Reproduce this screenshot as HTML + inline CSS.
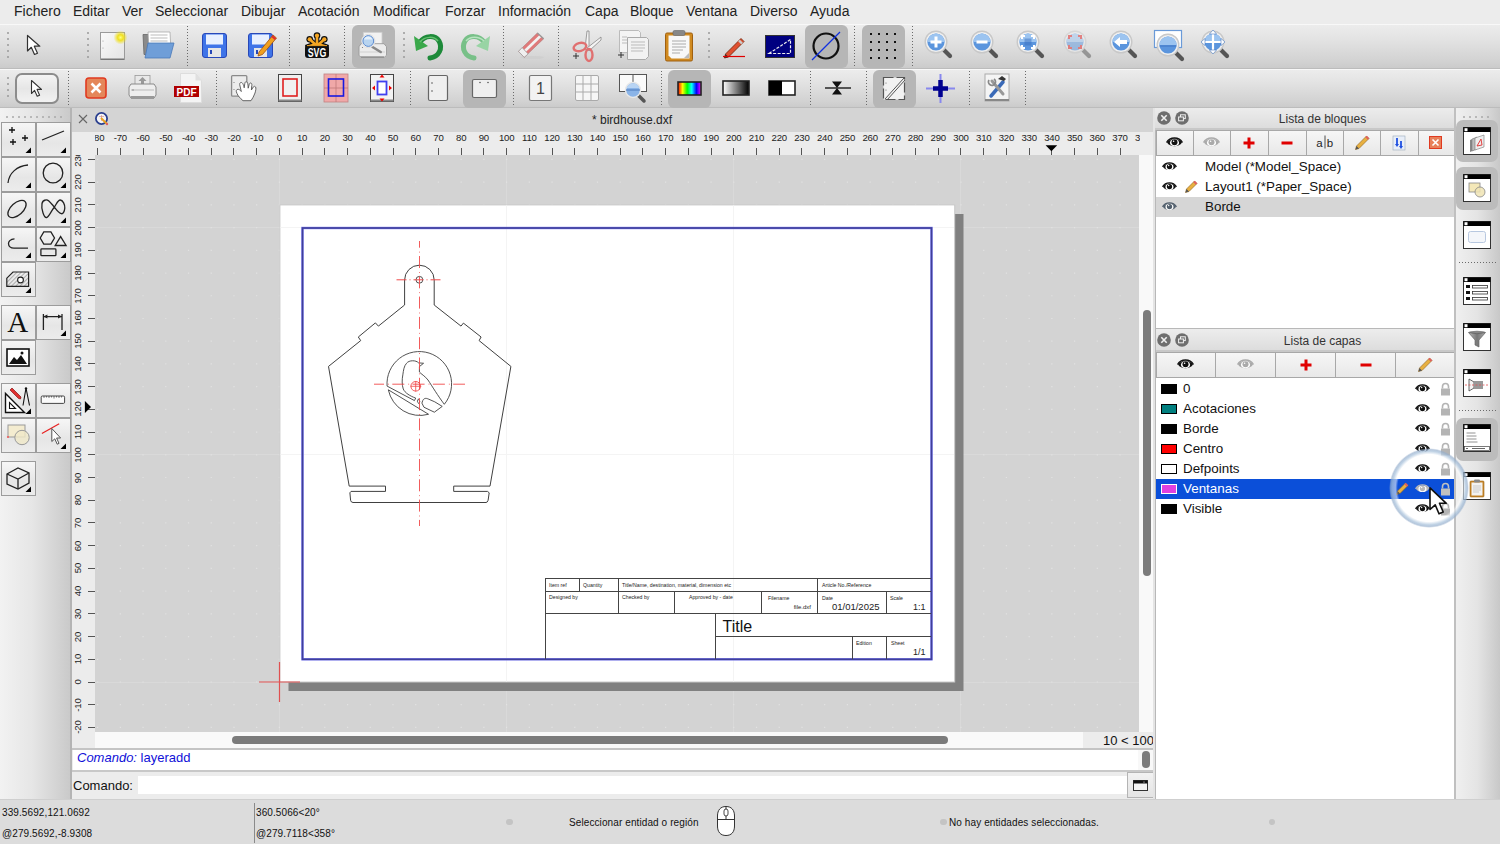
<!DOCTYPE html>
<html><head><meta charset="utf-8">
<style>
*{margin:0;padding:0;box-sizing:border-box}
html,body{width:1500px;height:844px;overflow:hidden;background:#ececec;font-family:"Liberation Sans",sans-serif;color:#1a1a1a}
.a{position:absolute}
svg.a{overflow:visible}
#menu{left:0;top:0;width:1500px;height:24px;background:#ececec}
#menu span{position:absolute;top:3px;font-size:14px;color:#222}
.tb{background:linear-gradient(#ececec 0%,#e4e4e4 30%,#d2d2d2 85%,#cbcbcb 100%)}
#tb1{left:0;top:24px;width:1500px;height:45px;border-top:1px solid #f8f8f8;border-bottom:1px solid #bcbcbc}
#tb2{left:0;top:69px;width:1500px;height:39px;border-top:1px solid #f8f8f8;border-bottom:1px solid #bcbcbc}
.sep{position:absolute;width:2px;background-image:radial-gradient(circle,#777 0.7px,transparent 1px);background-size:2px 4px}
.hl{position:absolute;background:#c6c6c6;border-radius:5px}
#left{left:0;top:108px;width:71px;height:691px;background:linear-gradient(90deg,#f2f2f2,#e6e6e6 45%,#c9c9c9)}
#tabbar{left:72px;top:108px;width:1082px;height:24px;background:#d4d4d4}
#rulerT{left:72px;top:132px;width:1082px;height:23px;background:#ececec}
#rulerL{left:72px;top:155px;width:23px;height:593px;background:#ececec}
#canvas{left:95px;top:155px;width:1044px;height:577px;background:#d3d3d3;overflow:hidden}
#hscroll{left:95px;top:732px;width:988px;height:16px;background:#f9f9f9}
#vscroll{left:1139px;top:155px;width:14px;height:577px;background:#f9f9f9}
.rl{position:absolute;top:1px;width:40px;text-align:center;font-size:9.6px;letter-spacing:-0.2px;line-height:12px;color:#222}
.rv{position:absolute;left:-14px;width:40px;height:12px;text-align:center;font-size:9.6px;letter-spacing:-0.2px;line-height:12px;color:#222;transform:rotate(-90deg)}
#cmdout{left:72px;top:749px;width:1082px;height:22px;background:#fff;border-top:1px solid #c8c8c8;border-bottom:1px solid #c8c8c8}
#cmdin{left:72px;top:771px;width:1082px;height:28px;background:#ececec}
#status{left:0;top:799px;width:1500px;height:45px;background:#dcdcdc;border-top:1px solid #cfcfcf}
#dock{left:1155px;top:108px;width:300px;height:691px;background:#ececec}
#rtb{left:1455px;top:108px;width:45px;height:691px;background:linear-gradient(90deg,#f0f0f0,#e4e4e4 50%,#c8c8c8)}
</style></head>
<body>
<div id="menu" class="a">
<span style="left:14px">Fichero</span>
<span style="left:73px">Editar</span>
<span style="left:122px">Ver</span>
<span style="left:155px">Seleccionar</span>
<span style="left:241px">Dibujar</span>
<span style="left:298px">Acotación</span>
<span style="left:373px">Modificar</span>
<span style="left:445px">Forzar</span>
<span style="left:498px">Información</span>
<span style="left:585px">Capa</span>
<span style="left:630px">Bloque</span>
<span style="left:686px">Ventana</span>
<span style="left:750px">Diverso</span>
<span style="left:810px">Ayuda</span>
</div>
<div id="tb1" class="a tb"></div>
<svg class="a" style="left:7px;top:32px" width="2" height="30" viewBox="0 0 2 30"><rect x="0" y="0" width="2" height="2" rx="1" fill="#9a9a9a"/><rect x="0" y="6" width="2" height="2" rx="1" fill="#9a9a9a"/><rect x="0" y="12" width="2" height="2" rx="1" fill="#9a9a9a"/><rect x="0" y="18" width="2" height="2" rx="1" fill="#9a9a9a"/><rect x="0" y="24" width="2" height="2" rx="1" fill="#9a9a9a"/></svg>
<svg class="a" style="left:26px;top:34px" width="16" height="22" viewBox="0 0 16 22"><path d="M1.5 1.5L1.5 17L5.3 13.3L8.5 20.5L11.5 19.2L8.3 12.2L13.8 12.2Z" fill="#fff" stroke="#333" stroke-width="1.2" stroke-linejoin="round"/></svg>
<svg class="a" style="left:87px;top:32px" width="2" height="30" viewBox="0 0 2 30"><rect x="0" y="0" width="2" height="2" rx="1" fill="#9a9a9a"/><rect x="0" y="6" width="2" height="2" rx="1" fill="#9a9a9a"/><rect x="0" y="12" width="2" height="2" rx="1" fill="#9a9a9a"/><rect x="0" y="18" width="2" height="2" rx="1" fill="#9a9a9a"/><rect x="0" y="24" width="2" height="2" rx="1" fill="#9a9a9a"/></svg>
<svg class="a" style="left:99px;top:30px" width="30" height="32" viewBox="0 0 30 32"><defs><linearGradient id="pg" x1="0" y1="0" x2="1" y2="1"><stop offset="0" stop-color="#fafafa"/><stop offset="1" stop-color="#e4e4e4"/></linearGradient><radialGradient id="glow"><stop offset="0" stop-color="#ffff80"/><stop offset="0.4" stop-color="#f0e020"/><stop offset="1" stop-color="#f0e020" stop-opacity="0"/></radialGradient></defs><rect x="1.5" y="2.5" width="24" height="27" fill="url(#pg)" stroke="#9a9a9a" stroke-width="1"/><rect x="2" y="28.5" width="23" height="1.5" fill="#777"/><circle cx="4" cy="11" r="0.6" fill="#999"/><circle cx="4" cy="18" r="0.6" fill="#999"/><circle cx="21.5" cy="7.5" r="7" fill="url(#glow)"/></svg>
<svg class="a" style="left:142px;top:31px" width="35" height="29" viewBox="0 0 35 29"><path d="M1 3.5h8l2 2h15v18H2z" fill="#8a8a8a" stroke="#666" stroke-width="0.8"/><path d="M6 1h22l1 19H7z" fill="#fff" stroke="#aaa" stroke-width="0.8"/><path d="M8.5 4h17M8.5 7h17M8.5 10h17" stroke="#bbb" stroke-width="1.2"/><path d="M6 12h26l-4 15H3z" fill="#6f9ed8" stroke="#4a78b8" stroke-width="0.8"/></svg>
<div class="a" style="left:186.5px;top:26px;width:1px;height:41px;background:repeating-linear-gradient(#6a6a6a 0 1px,transparent 1px 3px)"></div>
<svg class="a" style="left:201px;top:32px" width="27" height="27" viewBox="0 0 27 27"><rect x="1.5" y="1.5" width="24" height="24" rx="2.5" fill="#3f74e8" stroke="#2848b8" stroke-width="1"/><rect x="5" y="2.5" width="17" height="10" fill="#e8f0ff"/><rect x="7" y="16" width="13" height="9" fill="#e6e6e6"/><rect x="9" y="18" width="2" height="4" fill="#2848b8"/></svg>
<svg class="a" style="left:247px;top:30px" width="31" height="30" viewBox="0 0 31 30"><rect x="1.5" y="3.5" width="24" height="24" rx="2.5" fill="#3f74e8" stroke="#2848b8" stroke-width="1"/><rect x="5" y="4.5" width="17" height="10" fill="#e8f0ff"/><rect x="7" y="18" width="13" height="9" fill="#e6e6e6"/><rect x="9" y="20" width="2" height="4" fill="#2848b8"/><path d="M12 22L26 5L29.5 8L15.5 24.5L11 26Z" fill="#f0a020" stroke="#a05010" stroke-width="0.8"/><path d="M25 6.2L28.5 9.2" stroke="#e03030" stroke-width="2.2"/></svg>
<div class="a" style="left:288.5px;top:26px;width:1px;height:41px;background:repeating-linear-gradient(#6a6a6a 0 1px,transparent 1px 3px)"></div>
<svg class="a" style="left:303px;top:32px" width="28" height="27" viewBox="0 0 28 27"><g fill="#111"><circle cx="6.7" cy="7.3" r="3.3"/><circle cx="14" cy="3.6" r="3.3"/><circle cx="21.3" cy="7.3" r="3.3"/></g><g stroke="#111" stroke-width="4.6" stroke-linecap="round"><path d="M14 14L6.7 7.3M14 14L14 3.6M14 14L21.3 7.3"/></g><path d="M2.5 14Q14 8 25.5 14Z" fill="#111" stroke="#111" stroke-width="2"/><g stroke="#f5a623" stroke-width="2.6" stroke-linecap="round"><path d="M14 14L6.7 7.3M14 14L14 3.6M14 14L21.3 7.3"/></g><circle cx="6.7" cy="7.3" r="2.1" fill="#f5a623"/><circle cx="14" cy="3.6" r="2.1" fill="#f5a623"/><circle cx="21.3" cy="7.3" r="2.1" fill="#f5a623"/><path d="M4 13.6Q14 9.5 24 13.6Z" fill="#f5a623"/><rect x="2" y="13" width="24" height="13" rx="3" fill="#111"/><path d="M4 13.6H24" stroke="#f5a623" stroke-width="1"/><text x="14" y="24.6" font-size="12.5" font-weight="bold" fill="#fff" text-anchor="middle" font-family="Liberation Sans" textLength="18.6" lengthAdjust="spacingAndGlyphs">SVG</text></svg>
<div class="a" style="left:344px;top:26px;width:1px;height:41px;background:repeating-linear-gradient(#6a6a6a 0 1px,transparent 1px 3px)"></div>
<div class="a" style="left:352px;top:25px;width:43px;height:43px;background:#b6b6b6;border-radius:6px"></div>
<svg class="a" style="left:358px;top:30px" width="32" height="30" viewBox="0 0 32 30"><rect x="5.3" y="2.3" width="18.7" height="14" fill="#f2f2f2" stroke="#ccc" stroke-width="0.8"/><path d="M3 13.7h23l2.5 3v8.5l-2 2H3l-2-2v-8.5z" fill="#ececec" stroke="#9a9a9a" stroke-width="0.9"/><path d="M2 22h25" stroke="#d0d0d0" stroke-width="1"/><rect x="3" y="26.2" width="23" height="1.8" fill="#8a8a8a" opacity="0.7"/><circle cx="4.5" cy="17.5" r="0.6" fill="#777"/><path d="M14.5 17L22.7 22" stroke="#888" stroke-width="2.6" stroke-linecap="round"/><circle cx="10.3" cy="11" r="6.6" fill="#fff" stroke="#ddd" stroke-width="1"/><circle cx="10.3" cy="11" r="5.4" fill="#b8d4f0" stroke="#5a8ad0" stroke-width="1"/><path d="M6 9.5A4.5 4.5 0 0 1 14.5 9.5" fill="#e4f0fc"/></svg>
<svg class="a" style="left:403px;top:32px" width="2" height="30" viewBox="0 0 2 30"><rect x="0" y="0" width="2" height="2" rx="1" fill="#9a9a9a"/><rect x="0" y="6" width="2" height="2" rx="1" fill="#9a9a9a"/><rect x="0" y="12" width="2" height="2" rx="1" fill="#9a9a9a"/><rect x="0" y="18" width="2" height="2" rx="1" fill="#9a9a9a"/><rect x="0" y="24" width="2" height="2" rx="1" fill="#9a9a9a"/></svg>
<svg class="a" style="left:413px;top:32px" width="32" height="28" viewBox="0 0 32 28"><path d="M7 10C12 3 22 3 26 9C30 16 26 25 17 26" fill="none" stroke="#1e8a3a" stroke-width="5" stroke-linecap="round"/><path d="M1 4L3 19L15 14Z" fill="#3aa84a"/><path d="M7 10C12 4 21 4 25 9" fill="none" stroke="#66c070" stroke-width="1.5"/></svg>
<svg class="a" style="left:459px;top:32px" width="32" height="28" viewBox="0 0 32 28"><path d="M25 10C20 3 10 3 6 9C2 16 6 25 15 26" fill="none" stroke="#78c088" stroke-width="5" stroke-linecap="round"/><path d="M31 4L29 19L17 14Z" fill="#98d4a4"/><path d="M25 9C20 4 11 4 7 9" fill="none" stroke="#b8e4c0" stroke-width="1.3"/></svg>
<div class="a" style="left:502.5px;top:26px;width:1px;height:41px;background:repeating-linear-gradient(#6a6a6a 0 1px,transparent 1px 3px)"></div>
<svg class="a" style="left:510px;top:26px" width="40" height="40" viewBox="0 0 40 40"><ellipse cx="22" cy="31.5" rx="12" ry="1.6" fill="#cfcfcf"/><path d="M8.5 25.4L27.3 7.1L33.6 12.8L14.2 31.3Z" fill="#e07a7a" stroke="#b07070" stroke-width="0.6"/><path d="M15.15 24.8L30.45 9.95" stroke="#f2f2f2" stroke-width="2.6"/><path d="M27.3 7.1L33.6 12.8" stroke="#999" stroke-width="1.4"/><path d="M8.5 25.4L12.1 21.6L18.2 28L14.2 31.3Z" fill="#f0f0f0" stroke="#999" stroke-width="0.7"/></svg>
<div class="a" style="left:558px;top:26px;width:1px;height:41px;background:repeating-linear-gradient(#6a6a6a 0 1px,transparent 1px 3px)"></div>
<svg class="a" style="left:572px;top:30px" width="30" height="32" viewBox="0 0 30 32"><path d="M15 1L13 19L17 20L17 1Z" fill="#f4f4f4" stroke="#888" stroke-width="0.8"/><path d="M29 7L15 18L17 21L29 10Z" fill="#f4f4f4" stroke="#888" stroke-width="0.8"/><ellipse cx="8" cy="17" rx="6.5" ry="4" fill="none" stroke="#e07070" stroke-width="2.4" transform="rotate(-15 8 17)"/><ellipse cx="17" cy="25" rx="3.5" ry="6" fill="none" stroke="#e07070" stroke-width="2.4"/><path d="M1 26h6M4 23v6" stroke="#333" stroke-width="1"/></svg>
<svg class="a" style="left:617px;top:29px" width="33" height="33" viewBox="0 0 33 33"><path d="M2.5 1.5h19l2 2v20h-21z" fill="#f4f4f4" stroke="#bbb" stroke-width="1"/><path d="M10.5 8.5h19l2 2v17l-3 3h-18z" fill="#f2f2f2" stroke="#aaa" stroke-width="1"/><path d="M14 13h14M14 16h14M14 19h14M14 22h12M5 8h5M5 11h5M5 14h5" stroke="#bbb" stroke-width="1"/><path d="M1 26h6M4 23v6" stroke="#333" stroke-width="1"/></svg>
<svg class="a" style="left:664px;top:29px" width="30" height="33" viewBox="0 0 30 33"><rect x="1.5" y="4" width="27" height="28" rx="1.5" fill="#d08a20" stroke="#a06010" stroke-width="1"/><path d="M4.5 6.5h21v23h-18l-3-3z" fill="#f8f8f8"/><rect x="9" y="1.5" width="12" height="5" rx="1.5" fill="#888" stroke="#666" stroke-width="0.6"/><path d="M8 12h14M8 15h14M8 18h14M8 21h11M8 24h8" stroke="#aaa" stroke-width="1"/><path d="M20 29l5-5v5z" fill="#bbb"/></svg>
<svg class="a" style="left:708px;top:32px" width="2" height="30" viewBox="0 0 2 30"><rect x="0" y="0" width="2" height="2" rx="1" fill="#9a9a9a"/><rect x="0" y="6" width="2" height="2" rx="1" fill="#9a9a9a"/><rect x="0" y="12" width="2" height="2" rx="1" fill="#9a9a9a"/><rect x="0" y="18" width="2" height="2" rx="1" fill="#9a9a9a"/><rect x="0" y="24" width="2" height="2" rx="1" fill="#9a9a9a"/></svg>
<svg class="a" style="left:722px;top:34px" width="24" height="24" viewBox="0 0 24 24"><path d="M3.5 20L19 4.5L22 7.5L6.5 23L2.5 24Z" fill="#e05030" stroke="#7a2a10" stroke-width="0.9"/><path d="M17 6.5L20 9.5" stroke="#ccc" stroke-width="2.4"/><path d="M2.5 24L3.5 20L6.5 23Z" fill="#333"/><path d="M1 22.5h22" stroke="#e00000" stroke-width="1.2"/></svg>
<svg class="a" style="left:765px;top:35px" width="30" height="23" viewBox="0 0 30 23"><rect x="0.5" y="0.5" width="29" height="22" fill="#000080" stroke="#333" stroke-width="1"/><path d="M4 18.5L25.5 4.5V18.5Z" fill="none" stroke="#eee" stroke-width="1.2" stroke-dasharray="3 1.5"/></svg>
<div class="a" style="left:805px;top:25px;width:42.5px;height:43px;background:#b6b6b6;border-radius:6px"></div>
<svg class="a" style="left:810px;top:30px" width="32" height="32" viewBox="0 0 32 32"><circle cx="16" cy="16" r="12.5" fill="none" stroke="#111" stroke-width="2.2"/><path d="M2 30L30 2" stroke="#1030e0" stroke-width="1.3"/></svg>
<div class="a" style="left:854px;top:26px;width:1px;height:41px;background:repeating-linear-gradient(#6a6a6a 0 1px,transparent 1px 3px)"></div>
<div class="a" style="left:862px;top:25px;width:43px;height:43px;background:#b6b6b6;border-radius:6px"></div>
<svg class="a" style="left:870px;top:33px" width="26" height="26" viewBox="0 0 26 26"><rect x="0" y="0" width="2" height="2" fill="#111"/><rect x="0" y="8" width="2" height="2" fill="#111"/><rect x="0" y="16" width="2" height="2" fill="#111"/><rect x="0" y="24" width="2" height="2" fill="#111"/><rect x="8" y="0" width="2" height="2" fill="#111"/><rect x="8" y="8" width="2" height="2" fill="#111"/><rect x="8" y="16" width="2" height="2" fill="#111"/><rect x="8" y="24" width="2" height="2" fill="#111"/><rect x="16" y="0" width="2" height="2" fill="#111"/><rect x="16" y="8" width="2" height="2" fill="#111"/><rect x="16" y="16" width="2" height="2" fill="#111"/><rect x="16" y="24" width="2" height="2" fill="#111"/><rect x="24" y="0" width="2" height="2" fill="#111"/><rect x="24" y="8" width="2" height="2" fill="#111"/><rect x="24" y="16" width="2" height="2" fill="#111"/><rect x="24" y="24" width="2" height="2" fill="#111"/></svg>
<div class="a" style="left:911.5px;top:26px;width:1px;height:41px;background:repeating-linear-gradient(#6a6a6a 0 1px,transparent 1px 3px)"></div>
<svg class="a" style="left:921.3px;top:27px" width="34" height="34" viewBox="0 0 34 34"><path d="M22 22L29 29" stroke="#555" stroke-width="4.2" stroke-linecap="round"/><circle cx="15" cy="15" r="10.8" fill="#f0f0f0" stroke="#c8c8c8" stroke-width="1.4"/><circle cx="15" cy="15" r="8.6" fill="#5b95dd"/><path d="M6.4 15A8.6 8.6 0 0 1 23.6 15" fill="#9cc4f0" /><path d="M15 9.5v11M9.5 15h11" stroke="#fff" stroke-width="3"/></svg>
<svg class="a" style="left:967.1px;top:27px" width="34" height="34" viewBox="0 0 34 34"><path d="M22 22L29 29" stroke="#555" stroke-width="4.2" stroke-linecap="round"/><circle cx="15" cy="15" r="10.8" fill="#f0f0f0" stroke="#c8c8c8" stroke-width="1.4"/><circle cx="15" cy="15" r="8.6" fill="#5b95dd"/><path d="M6.4 15A8.6 8.6 0 0 1 23.6 15" fill="#9cc4f0" /><path d="M9.5 15h11" stroke="#fff" stroke-width="3"/></svg>
<svg class="a" style="left:1013.3px;top:27px" width="34" height="34" viewBox="0 0 34 34"><path d="M22 22L29 29" stroke="#555" stroke-width="4.2" stroke-linecap="round"/><circle cx="15" cy="15" r="10.8" fill="#f0f0f0" stroke="#c8c8c8" stroke-width="1.4"/><circle cx="15" cy="15" r="8.6" fill="#5b95dd"/><path d="M6.4 15A8.6 8.6 0 0 1 23.6 15" fill="#9cc4f0" /><path d="M9 12V9h3M18 9h3v3M21 18v3h-3M12 21H9v-3" fill="none" stroke="#fff" stroke-width="2"/><rect x="11.5" y="11.5" width="7" height="7" fill="#3a6fc0" opacity="0.5"/></svg>
<svg class="a" style="left:1059.5px;top:27px" width="34" height="34" viewBox="0 0 34 34"><g opacity="0.5"><path d="M22 22L29 29" stroke="#555" stroke-width="4.2" stroke-linecap="round"/><circle cx="15" cy="15" r="10.8" fill="#f0f0f0" stroke="#c8c8c8" stroke-width="1.4"/><circle cx="15" cy="15" r="8.6" fill="#5b95dd"/><path d="M6.4 15A8.6 8.6 0 0 1 23.6 15" fill="#9cc4f0" /><path d="M9 12V9h3M18 9h3v3M21 18v3h-3M12 21H9v-3" fill="none" stroke="#e02020" stroke-width="2"/></g></svg>
<svg class="a" style="left:1105.7px;top:27px" width="34" height="34" viewBox="0 0 34 34"><path d="M22 22L29 29" stroke="#555" stroke-width="4.2" stroke-linecap="round"/><circle cx="15" cy="15" r="10.8" fill="#f0f0f0" stroke="#c8c8c8" stroke-width="1.4"/><circle cx="15" cy="15" r="8.6" fill="#5b95dd"/><path d="M6.4 15A8.6 8.6 0 0 1 23.6 15" fill="#9cc4f0" /><path d="M8 15l6-5v3h7v4h-7v3z" fill="#fff"/></svg>
<svg class="a" style="left:1153px;top:29px" width="34" height="34" viewBox="0 0 34 34"><rect x="1.5" y="1.5" width="27" height="17" fill="#fff" stroke="#6a9ad8" stroke-width="1.2"/><path d="M22 23L29 30" stroke="#555" stroke-width="4.2" stroke-linecap="round"/><circle cx="15" cy="16" r="10.8" fill="#f0f0f0" stroke="#c8c8c8" stroke-width="1.4"/><circle cx="15" cy="16" r="8.6" fill="#5b95dd"/><path d="M6.4 16A8.6 8.6 0 0 1 23.6 16" fill="#9cc4f0" /><path d="M6.5 17h17" stroke="#3a70c0" stroke-width="0.8"/></svg>
<svg class="a" style="left:1198.1px;top:27px" width="34" height="34" viewBox="0 0 34 34"><path d="M22 22L29 29" stroke="#555" stroke-width="4.2" stroke-linecap="round"/><circle cx="15" cy="15" r="10.8" fill="#f0f0f0" stroke="#c8c8c8" stroke-width="1.4"/><circle cx="15" cy="15" r="8.6" fill="#5b95dd"/><path d="M6.4 15A8.6 8.6 0 0 1 23.6 15" fill="#9cc4f0" /><path d="M15 5v20M5 15h20" stroke="#fff" stroke-width="2.2"/><path d="M15 3l-3.5 4h7zM15 27l-3.5-4h7zM3 15l4-3.5v7zM27 15l-4-3.5v7z" fill="#fff" stroke="#4a7ac0" stroke-width="0.6"/></svg><div id="tb2" class="a tb"></div>
<svg class="a" style="left:7px;top:76.5px" width="2" height="24" viewBox="0 0 2 24"><rect x="0" y="0" width="2" height="2" rx="1" fill="#9a9a9a"/><rect x="0" y="6" width="2" height="2" rx="1" fill="#9a9a9a"/><rect x="0" y="12" width="2" height="2" rx="1" fill="#9a9a9a"/><rect x="0" y="18" width="2" height="2" rx="1" fill="#9a9a9a"/></svg>
<div class="a" style="left:14.5px;top:72.5px;width:44px;height:31.5px;border:2px solid #8c8c8c;border-radius:7px;background:linear-gradient(#f4f4f4,#e6e6e6 50%,#f2f2f2)"></div>
<svg class="a" style="left:30px;top:79px" width="14" height="19" viewBox="0 0 14 19"><path d="M1.5 1.5L1.5 14.5L4.6 11.4L7.2 17.2L9.6 16.2L7 10.4L11.5 10.4Z" fill="#fff" stroke="#333" stroke-width="1.1" stroke-linejoin="round"/></svg>
<div class="a" style="left:67.5px;top:71px;width:1px;height:35px;background:repeating-linear-gradient(#6a6a6a 0 1px,transparent 1px 3px)"></div>
<svg class="a" style="left:85px;top:77px" width="22" height="22" viewBox="0 0 22 22"><rect x="1" y="1" width="20" height="20" rx="3" fill="#e4875a" stroke="#e03a20" stroke-width="1.6"/><path d="M6.5 6.5L15.5 15.5M15.5 6.5L6.5 15.5" stroke="#fff" stroke-width="2.6"/></svg>
<svg class="a" style="left:128px;top:74px" width="29" height="28" viewBox="0 0 29 28"><rect x="7" y="1.5" width="15" height="11" fill="#e8e8e8" stroke="#999" stroke-width="0.8"/><path d="M14.5 3l-4 4h2.5v4h3v-4h2.5z" fill="#999"/><path d="M3 10h23l2 3v8l-2 3H3l-2-3v-8z" fill="#eee" stroke="#8a8a8a" stroke-width="1"/><path d="M3 16h23" stroke="#bbb" stroke-width="1"/><rect x="3" y="22" width="23" height="3" fill="#999"/><circle cx="5" cy="16" r="0.8" fill="#888"/></svg>
<svg class="a" style="left:173px;top:72px" width="31" height="32" viewBox="0 0 31 32"><path d="M7.5 1.5h15l6 7v22h-21z" fill="#f4f4f4" stroke="#ddd" stroke-width="1"/><path d="M22.5 1.5v7h6" fill="#e0e0e0"/><rect x="1" y="14" width="25" height="11" fill="#b00000"/><text x="13.5" y="23.5" font-size="10" font-weight="bold" fill="#fff" text-anchor="middle" font-family="Liberation Sans" textLength="20" lengthAdjust="spacingAndGlyphs">PDF</text></svg>
<div class="a" style="left:215.5px;top:71px;width:1px;height:35px;background:repeating-linear-gradient(#6a6a6a 0 1px,transparent 1px 3px)"></div>
<svg class="a" style="left:230px;top:74px" width="28" height="28" viewBox="0 0 28 28"><rect x="1.6" y="1.6" width="15.2" height="20.6" rx="1" fill="#ececec" stroke="#8a8a8a" stroke-width="1.3"/><circle cx="4" cy="8.5" r="0.6" fill="#777"/><circle cx="4" cy="15.5" r="0.6" fill="#777"/><path d="M13 26.7C10 24 8 22 7 19.5C5.5 17 6.5 15 8.3 15.3C9.5 15.5 10.5 16.5 11.3 17.5L10 12C9.2 9.5 10 8.5 11.2 8.5C12.5 8.5 13.3 10 14.2 13.8L14.8 9.5C15 8 15.5 7.8 16.2 7.8C17.3 7.8 17.8 9 18 11L18.2 14.2L19.2 10.5C19.6 9 20.5 8.8 21.2 9.2C22 9.7 22 11 21.6 13L21.4 16L23.3 13C24 12 25 12.2 25.6 13C26.2 14 25.8 16.5 25 19C24 22 22.5 24.5 21 26.7Z" fill="#fff" stroke="#555" stroke-width="0.9"/></svg>
<svg class="a" style="left:277px;top:73px" width="26" height="30" viewBox="0 0 26 30"><rect x="1.5" y="1.5" width="23" height="27" fill="#f0f0f0" stroke="#444" stroke-width="1"/><rect x="1.5" y="26.5" width="23" height="2" fill="#888"/><rect x="6" y="6" width="14" height="17" fill="none" stroke="#e02020" stroke-width="1.6"/></svg>
<svg class="a" style="left:323px;top:73px" width="26" height="30" viewBox="0 0 26 30"><rect x="1" y="1" width="24" height="28" fill="#f0a8a8" stroke="#c08080" stroke-width="0.8"/><path d="M13 1v28M1 15h24" stroke="#c07878" stroke-width="0.8"/><rect x="5.5" y="6" width="15" height="17" fill="none" stroke="#1818e0" stroke-width="1.6"/></svg>
<svg class="a" style="left:369px;top:73px" width="26" height="30" viewBox="0 0 26 30"><rect x="1.5" y="1.5" width="23" height="27" fill="#f2f2f2" stroke="#444" stroke-width="1"/><rect x="1.5" y="26.5" width="23" height="2" fill="#888"/><rect x="8.5" y="8.5" width="9" height="13" fill="#fff" stroke="#4040f0" stroke-width="1.8"/><path d="M13 1.5l-2.5 3h5zM13 28.5l-2.5-3h5zM3 15l3-2.5v5zM23 15l-3-2.5v5z" fill="#e00"/></svg>
<div class="a" style="left:409.5px;top:71px;width:1px;height:35px;background:repeating-linear-gradient(#6a6a6a 0 1px,transparent 1px 3px)"></div>
<svg class="a" style="left:427px;top:74px" width="23" height="28" viewBox="0 0 23 28"><rect x="1.5" y="1.5" width="19" height="25" rx="1.5" fill="#efefef" stroke="#666" stroke-width="1.2"/><circle cx="5" cy="9" r="0.8" fill="#555"/><circle cx="5" cy="17" r="0.8" fill="#555"/></svg>
<div class="a" style="left:463px;top:70px;width:43px;height:38px;background:#b6b6b6;border-radius:6px"></div>
<svg class="a" style="left:471px;top:78px" width="27" height="21" viewBox="0 0 27 21"><rect x="1.5" y="1.5" width="24" height="18" rx="1.5" fill="#efefef" stroke="#666" stroke-width="1.2"/><circle cx="9" cy="4.5" r="0.8" fill="#555"/><circle cx="17" cy="4.5" r="0.8" fill="#555"/></svg>
<div class="a" style="left:512.5px;top:71px;width:1px;height:35px;background:repeating-linear-gradient(#6a6a6a 0 1px,transparent 1px 3px)"></div>
<svg class="a" style="left:528px;top:74px" width="25" height="28" viewBox="0 0 25 28"><rect x="1.5" y="1.5" width="22" height="25" rx="1.5" fill="#f2f2f2" stroke="#777" stroke-width="1.2"/><text x="12.5" y="20" font-size="16" fill="#444" text-anchor="middle" font-family="Liberation Sans">1</text></svg>
<svg class="a" style="left:574px;top:74px" width="26" height="28" viewBox="0 0 26 28"><rect x="1.5" y="1.5" width="23" height="25" rx="1.5" fill="#f6f6f6" stroke="#aaa" stroke-width="1"/><path d="M9 1.5v25M17 1.5v25M1.5 10h23M1.5 18h23" stroke="#aaa" stroke-width="1"/></svg>
<svg class="a" style="left:618px;top:73px" width="32" height="32" viewBox="0 0 32 32"><rect x="1.5" y="1.5" width="27" height="17" fill="#fafafa" stroke="#555" stroke-width="1"/><path d="M15 1.5v17" stroke="#555" stroke-width="1"/><path d="M19.5 21.5L26 28" stroke="#555" stroke-width="3.5" stroke-linecap="round"/><circle cx="15" cy="17" r="7.5" fill="#8ab4e8" stroke="#e8e8e8" stroke-width="1.5"/><path d="M8 17h14" stroke="#3a6ab0" stroke-width="0.8"/><path d="M8.5 15A7 7 0 0 1 21.5 15" fill="#b8d4f4"/></svg>
<div class="a" style="left:660.5px;top:71px;width:1px;height:35px;background:repeating-linear-gradient(#6a6a6a 0 1px,transparent 1px 3px)"></div>
<div class="a" style="left:668px;top:70px;width:43px;height:38px;background:#b6b6b6;border-radius:6px"></div>
<svg class="a" style="left:677px;top:81px" width="25" height="15" viewBox="0 0 25 15"><defs><linearGradient id="rb"><stop offset="0" stop-color="#f00"/><stop offset="0.2" stop-color="#ff0"/><stop offset="0.4" stop-color="#0f0"/><stop offset="0.6" stop-color="#0ff"/><stop offset="0.8" stop-color="#00f"/><stop offset="1" stop-color="#f0f"/></linearGradient></defs><rect x="1" y="1" width="23" height="13" fill="url(#rb)" stroke="#222" stroke-width="1.6"/></svg>
<svg class="a" style="left:722px;top:80px" width="28" height="17" viewBox="0 0 28 17"><defs><linearGradient id="gr"><stop offset="0" stop-color="#fff"/><stop offset="1" stop-color="#000"/></linearGradient></defs><rect x="1" y="1" width="26" height="14" fill="url(#gr)" stroke="#222" stroke-width="1.6"/></svg>
<svg class="a" style="left:768px;top:80px" width="28" height="17" viewBox="0 0 28 17"><rect x="1" y="1" width="26" height="14" fill="#fff" stroke="#222" stroke-width="1.6"/><rect x="1" y="1" width="13" height="14" fill="#000"/></svg>
<div class="a" style="left:809.5px;top:71px;width:1px;height:35px;background:repeating-linear-gradient(#6a6a6a 0 1px,transparent 1px 3px)"></div>
<svg class="a" style="left:824px;top:80px" width="28" height="16" viewBox="0 0 28 16"><path d="M1 8h26" stroke="#333" stroke-width="1.6"/><path d="M8 1.5h10L13 8zM8 14.5h10L13 8z" fill="#111"/></svg>
<div class="a" style="left:865.5px;top:71px;width:1px;height:35px;background:repeating-linear-gradient(#6a6a6a 0 1px,transparent 1px 3px)"></div>
<div class="a" style="left:873px;top:70px;width:42.5px;height:37.5px;background:#b6b6b6;border-radius:6px"></div>
<svg class="a" style="left:882px;top:76px" width="25" height="25" viewBox="0 0 25 25"><rect x="1.5" y="1.5" width="21" height="22" fill="#f2f2f2" stroke="#555" stroke-width="1.2" stroke-dasharray="10 3"/><path d="M3 23L22 2M5 24L23 4" stroke="#555" stroke-width="1"/><circle cx="4" cy="7" r="0.6" fill="#666"/><circle cx="4" cy="14" r="0.6" fill="#666"/></svg>
<svg class="a" style="left:926px;top:74px" width="30" height="29" viewBox="0 0 30 29"><path d="M14.5 0v29M0 14.5h29" stroke="#8888ee" stroke-width="2"/><path d="M14.5 6v17M7 14.5h15" stroke="#000090" stroke-width="4.5"/></svg>
<div class="a" style="left:968.5px;top:71px;width:1px;height:35px;background:repeating-linear-gradient(#6a6a6a 0 1px,transparent 1px 3px)"></div>
<svg class="a" style="left:984px;top:73px" width="26" height="29" viewBox="0 0 26 29"><rect x="1" y="1" width="24" height="27" fill="#f4f4f4" stroke="#aaa" stroke-width="1"/><rect x="1" y="26" width="24" height="2" fill="#888"/><path d="M7 23L19 9" stroke="#3a6ab8" stroke-width="3.5" stroke-linecap="round"/><path d="M8 8L19 21" stroke="#999" stroke-width="3" stroke-linecap="round"/><path d="M5 7a3.5 3.5 0 1 0 5-1" fill="none" stroke="#888" stroke-width="1.8"/><path d="M14 6l4-3 4 3-2 2z" fill="#333"/></svg>
<div class="a" style="left:1024.5px;top:71px;width:1px;height:35px;background:repeating-linear-gradient(#6a6a6a 0 1px,transparent 1px 3px)"></div><div id="left" class="a"></div>
<div class="a" style="left:70px;top:108px;width:2px;height:691px;background:#b4b4b4"></div>
<svg class="a" style="left:6px;top:116px" width="60" height="3"><rect x="0" y="0" width="2" height="2" rx="1" fill="#a8a8a8"/><rect x="6" y="0" width="2" height="2" rx="1" fill="#a8a8a8"/><rect x="12" y="0" width="2" height="2" rx="1" fill="#a8a8a8"/><rect x="18" y="0" width="2" height="2" rx="1" fill="#a8a8a8"/><rect x="24" y="0" width="2" height="2" rx="1" fill="#a8a8a8"/><rect x="30" y="0" width="2" height="2" rx="1" fill="#a8a8a8"/><rect x="36" y="0" width="2" height="2" rx="1" fill="#a8a8a8"/><rect x="42" y="0" width="2" height="2" rx="1" fill="#a8a8a8"/><rect x="48" y="0" width="2" height="2" rx="1" fill="#a8a8a8"/><rect x="54" y="0" width="2" height="2" rx="1" fill="#a8a8a8"/></svg>
<div class="a" style="left:1px;top:122px;width:35px;height:35px;border:1.5px solid #9c9c9c;background:linear-gradient(#f6f6f6,#e6e6e6 60%,#ececec)"></div>
<svg class="a" style="left:1px;top:122px" width="35" height="35" viewBox="0 0 35 35"><path d="M8 8h6M11 5v6M21 16h6M24 13v6M9 20h6M12 17v6" stroke="#111" stroke-width="1.3"/><path d="M30 25.5V31H24.5Z" fill="#000"/></svg>
<div class="a" style="left:36px;top:122px;width:35px;height:35px;border:1.5px solid #9c9c9c;background:linear-gradient(#f6f6f6,#e6e6e6 60%,#ececec)"></div>
<svg class="a" style="left:36px;top:122px" width="35" height="35" viewBox="0 0 35 35"><path d="M6 18L28 9" fill="none" stroke="#222" stroke-width="1.3"/><path d="M30 25.5V31H24.5Z" fill="#000"/></svg>
<div class="a" style="left:1px;top:157px;width:35px;height:35px;border:1.5px solid #9c9c9c;background:linear-gradient(#f6f6f6,#e6e6e6 60%,#ececec)"></div>
<svg class="a" style="left:1px;top:157px" width="35" height="35" viewBox="0 0 35 35"><path d="M7 26C8 16 16 9 27 8" fill="none" stroke="#222" stroke-width="1.3"/><path d="M30 25.5V31H24.5Z" fill="#000"/></svg>
<div class="a" style="left:36px;top:157px;width:35px;height:35px;border:1.5px solid #9c9c9c;background:linear-gradient(#f6f6f6,#e6e6e6 60%,#ececec)"></div>
<svg class="a" style="left:36px;top:157px" width="35" height="35" viewBox="0 0 35 35"><circle cx="17" cy="16" r="9.8" fill="none" stroke="#222" stroke-width="1.3"/><path d="M30 25.5V31H24.5Z" fill="#000"/></svg>
<div class="a" style="left:1px;top:192px;width:35px;height:35px;border:1.5px solid #9c9c9c;background:linear-gradient(#f6f6f6,#e6e6e6 60%,#ececec)"></div>
<svg class="a" style="left:1px;top:192px" width="35" height="35" viewBox="0 0 35 35"><ellipse cx="16" cy="17" rx="11" ry="6" transform="rotate(-42 16 17)" fill="none" stroke="#222" stroke-width="1.3"/><path d="M30 25.5V31H24.5Z" fill="#000"/></svg>
<div class="a" style="left:36px;top:192px;width:35px;height:35px;border:1.5px solid #9c9c9c;background:linear-gradient(#f6f6f6,#e6e6e6 60%,#ececec)"></div>
<svg class="a" style="left:36px;top:192px" width="35" height="35" viewBox="0 0 35 35"><path d="M6 11.5C5 17 8 26 10.6 25.5C13 25 15 19 18.5 15C21 11 22 8 24.2 8C27 8 29 13 28.8 16C28.5 20 27 22 25.4 21.7C22 21 20 17 17.4 14C14 10 12 7 9.5 8C7 8.5 6.3 10 6 11.5Z" fill="none" stroke="#222" stroke-width="1.3"/><path d="M30 25.5V31H24.5Z" fill="#000"/></svg>
<div class="a" style="left:1px;top:227px;width:35px;height:35px;border:1.5px solid #9c9c9c;background:linear-gradient(#f6f6f6,#e6e6e6 60%,#ececec)"></div>
<svg class="a" style="left:1px;top:227px" width="35" height="35" viewBox="0 0 35 35"><path d="M13.5 11.8C9 12 7.5 15 7.5 16.5C7.5 19 9.5 21.2 13 21.2H27" fill="none" stroke="#222" stroke-width="1.3"/><path d="M30 25.5V31H24.5Z" fill="#000"/></svg>
<div class="a" style="left:36px;top:227px;width:35px;height:35px;border:1.5px solid #9c9c9c;background:linear-gradient(#f6f6f6,#e6e6e6 60%,#ececec)"></div>
<svg class="a" style="left:36px;top:227px" width="35" height="35" viewBox="0 0 35 35"><path d="M4.2 11L7.8 4.8H14.9L18.5 11L14.9 17.1H7.8Z" fill="none" stroke="#222" stroke-width="1.3"/><path d="M19.2 18.5L24.6 9.6L30.1 18.5Z" fill="none" stroke="#222" stroke-width="1.3"/><rect x="4.9" y="21.9" width="15" height="6.8" rx="0.8" fill="none" stroke="#222" stroke-width="1.3"/><path d="M30 25.5V31H24.5Z" fill="#000"/></svg>
<div class="a" style="left:1px;top:262px;width:35px;height:35px;border:1.5px solid #9c9c9c;background:linear-gradient(#f6f6f6,#e6e6e6 60%,#ececec)"></div>
<svg class="a" style="left:1px;top:262px" width="35" height="35" viewBox="0 0 35 35"><defs><pattern id="hatch" width="3" height="3" patternUnits="userSpaceOnUse" patternTransform="rotate(45)"><line x1="0" y1="0" x2="0" y2="3" stroke="#555" stroke-width="0.8"/></pattern></defs><path d="M5.8 24.4V16.2L12 10H27.6V24.4Z" fill="url(#hatch)" stroke="#222" stroke-width="1.2"/><circle cx="19.5" cy="18" r="2.9" fill="#fff" stroke="#222" stroke-width="1.1"/><path d="M30 25.5V31H24.5Z" fill="#000"/></svg>
<div class="a" style="left:1px;top:305px;width:35px;height:35px;border:1.5px solid #9c9c9c;background:linear-gradient(#f6f6f6,#e6e6e6 60%,#ececec)"></div>
<svg class="a" style="left:1px;top:305px" width="35" height="35" viewBox="0 0 35 35"><text x="16.8" y="27" font-size="29" font-family="Liberation Serif" fill="#111" text-anchor="middle">A</text></svg>
<div class="a" style="left:36px;top:305px;width:35px;height:35px;border:1.5px solid #9c9c9c;background:linear-gradient(#f6f6f6,#e6e6e6 60%,#ececec)"></div>
<svg class="a" style="left:36px;top:305px" width="35" height="35" viewBox="0 0 35 35"><path d="M7.4 9V25M26 9V25M7.4 11.6H26" fill="none" stroke="#222" stroke-width="1.3"/><path d="M7.4 11.6l4-2v4zM26 11.6l-4-2v4z" fill="#222"/><path d="M30 25.5V31H24.5Z" fill="#000"/></svg>
<div class="a" style="left:1px;top:340px;width:35px;height:35px;border:1.5px solid #9c9c9c;background:linear-gradient(#f6f6f6,#e6e6e6 60%,#ececec)"></div>
<svg class="a" style="left:1px;top:340px" width="35" height="35" viewBox="0 0 35 35"><rect x="6" y="9" width="22" height="17" fill="#fff" stroke="#111" stroke-width="1.6"/><path d="M8 24L13 17L16 20L20 15L26 24Z" fill="#111"/><circle cx="21" cy="13" r="1.5" fill="#111"/></svg>
<div class="a" style="left:1px;top:383px;width:35px;height:35px;border:1.5px solid #9c9c9c;background:linear-gradient(#f6f6f6,#e6e6e6 60%,#ececec)"></div>
<svg class="a" style="left:1px;top:383px" width="35" height="35" viewBox="0 0 35 35"><path d="M4.5 29.5V10.5L23.5 29.5Z" fill="#fff" stroke="#111" stroke-width="1.4"/><path d="M8.5 25.5V19.5L14.5 25.5Z" fill="none" stroke="#111" stroke-width="1.1"/><path d="M9 7L11 5L20 14L19.5 16L17.5 15.5Z" fill="#e03030" stroke="#700" stroke-width="0.6"/><path d="M25 5L22 22.5M25 5L28.5 22.5" stroke="#111" stroke-width="1.1" fill="none"/><circle cx="25" cy="5.5" r="1.2" fill="#111"/><path d="M30 25.5V31H24.5Z" fill="#000"/></svg>
<div class="a" style="left:36px;top:383px;width:35px;height:35px;border:1.5px solid #9c9c9c;background:linear-gradient(#f6f6f6,#e6e6e6 60%,#ececec)"></div>
<svg class="a" style="left:36px;top:383px" width="35" height="35" viewBox="0 0 35 35"><rect x="5.2" y="13" width="23.4" height="7.4" rx="1.2" fill="#fafafa" stroke="#444" stroke-width="1"/><path d="M8 13v2M10.5 13v1.5M13 13v2M15.5 13v1.5M18 13v2.5M20.5 13v1.5M23 13v2M25.5 13v1.5" stroke="#444" stroke-width="0.7"/></svg>
<div class="a" style="left:1px;top:418px;width:35px;height:35px;border:1.5px solid #9c9c9c;background:linear-gradient(#f6f6f6,#e6e6e6 60%,#ececec)"></div>
<svg class="a" style="left:1px;top:418px" width="35" height="35" viewBox="0 0 35 35"><rect x="7" y="7" width="17" height="12" fill="#f4ecd0" stroke="#999" stroke-width="1"/><circle cx="21" cy="19.5" r="7.2" fill="#f0e8c8" fill-opacity="0.8" stroke="#999" stroke-width="1"/><circle cx="7" cy="19" r="1.1" fill="#f06060"/></svg>
<div class="a" style="left:36px;top:418px;width:35px;height:35px;border:1.5px solid #9c9c9c;background:linear-gradient(#f6f6f6,#e6e6e6 60%,#ececec)"></div>
<svg class="a" style="left:36px;top:418px" width="35" height="35" viewBox="0 0 35 35"><path d="M5.9 15.5L23.2 5.8" stroke="#e82020" stroke-width="1.2"/><path d="M15.8 10.5V23.5L18.8 20.8L21.2 26.2L23 25.4L20.6 20H24.6Z" fill="#fff" stroke="#444" stroke-width="0.9"/><path d="M30 25.5V31H24.5Z" fill="#000"/></svg>
<div class="a" style="left:1px;top:461px;width:35px;height:35px;border:1.5px solid #9c9c9c;background:linear-gradient(#f6f6f6,#e6e6e6 60%,#ececec)"></div>
<svg class="a" style="left:1px;top:461px" width="35" height="35" viewBox="0 0 35 35"><path d="M6 13L17 7L28 12V22L17 28L6 23Z" fill="none" stroke="#222" stroke-width="1.3"/><path d="M6 13L17 18L28 12M17 18V28" fill="none" stroke="#222" stroke-width="1.3"/><path d="M30 25.5V31H24.5Z" fill="#000"/></svg><div id="tabbar" class="a"></div>
<svg class="a" style="left:78px;top:114px" width="10" height="10" viewBox="0 0 10 10"><path d="M1 1L9 9M9 1L1 9" stroke="#666" stroke-width="1.1"/></svg>
<svg class="a" style="left:95px;top:112px" width="14" height="14" viewBox="0 0 14 14"><circle cx="6.5" cy="6.5" r="5.6" fill="#f4f4f4" stroke="#2a3f8f" stroke-width="1.8"/><path d="M4 4.5h5M6.5 3v6" stroke="#c88" stroke-width="0.6"/><path d="M6 6l6 6" stroke="#e8a020" stroke-width="2"/><circle cx="12" cy="12" r="1.2" fill="#e06060"/></svg>
<div class="a" style="left:592px;top:113px;font-size:12px;color:#222">* birdhouse.dxf</div>
<div id="rulerT" class="a"></div>
<div id="rulerL" class="a"></div>
<svg class="a" style="left:95px;top:155px;overflow:hidden" width="1044" height="577" viewBox="95 155 1044 577"><rect x="95" y="155" width="1044" height="577" fill="#d3d3d3"/><line x1="279.5" y1="155" x2="279.5" y2="732" stroke="#d9d9d9" stroke-width="1"/><line x1="506.5" y1="155" x2="506.5" y2="732" stroke="#d9d9d9" stroke-width="1"/><line x1="733.5" y1="155" x2="733.5" y2="732" stroke="#d9d9d9" stroke-width="1"/><line x1="960.5" y1="155" x2="960.5" y2="732" stroke="#d9d9d9" stroke-width="1"/><line x1="95" y1="682.5" x2="1139" y2="682.5" stroke="#d9d9d9" stroke-width="1"/><line x1="95" y1="454.5" x2="1139" y2="454.5" stroke="#d9d9d9" stroke-width="1"/><line x1="95" y1="227.5" x2="1139" y2="227.5" stroke="#d9d9d9" stroke-width="1"/><path d="M97.04 726.84h1.2v1.2h-1.2zM97.04 704.12h1.2v1.2h-1.2zM97.04 681.4h1.2v1.2h-1.2zM97.04 658.68h1.2v1.2h-1.2zM97.04 635.96h1.2v1.2h-1.2zM97.04 613.24h1.2v1.2h-1.2zM97.04 590.52h1.2v1.2h-1.2zM97.04 567.8h1.2v1.2h-1.2zM97.04 545.08h1.2v1.2h-1.2zM97.04 522.36h1.2v1.2h-1.2zM97.04 499.64h1.2v1.2h-1.2zM97.04 476.92h1.2v1.2h-1.2zM97.04 454.2h1.2v1.2h-1.2zM97.04 431.48h1.2v1.2h-1.2zM97.04 408.76h1.2v1.2h-1.2zM97.04 386.04h1.2v1.2h-1.2zM97.04 363.32h1.2v1.2h-1.2zM97.04 340.6h1.2v1.2h-1.2zM97.04 317.88h1.2v1.2h-1.2zM97.04 295.16h1.2v1.2h-1.2zM97.04 272.44h1.2v1.2h-1.2zM97.04 249.72h1.2v1.2h-1.2zM97.04 227h1.2v1.2h-1.2zM97.04 204.28h1.2v1.2h-1.2zM97.04 181.56h1.2v1.2h-1.2zM97.04 158.84h1.2v1.2h-1.2zM119.76 726.84h1.2v1.2h-1.2zM119.76 704.12h1.2v1.2h-1.2zM119.76 681.4h1.2v1.2h-1.2zM119.76 658.68h1.2v1.2h-1.2zM119.76 635.96h1.2v1.2h-1.2zM119.76 613.24h1.2v1.2h-1.2zM119.76 590.52h1.2v1.2h-1.2zM119.76 567.8h1.2v1.2h-1.2zM119.76 545.08h1.2v1.2h-1.2zM119.76 522.36h1.2v1.2h-1.2zM119.76 499.64h1.2v1.2h-1.2zM119.76 476.92h1.2v1.2h-1.2zM119.76 454.2h1.2v1.2h-1.2zM119.76 431.48h1.2v1.2h-1.2zM119.76 408.76h1.2v1.2h-1.2zM119.76 386.04h1.2v1.2h-1.2zM119.76 363.32h1.2v1.2h-1.2zM119.76 340.6h1.2v1.2h-1.2zM119.76 317.88h1.2v1.2h-1.2zM119.76 295.16h1.2v1.2h-1.2zM119.76 272.44h1.2v1.2h-1.2zM119.76 249.72h1.2v1.2h-1.2zM119.76 227h1.2v1.2h-1.2zM119.76 204.28h1.2v1.2h-1.2zM119.76 181.56h1.2v1.2h-1.2zM119.76 158.84h1.2v1.2h-1.2zM142.48 726.84h1.2v1.2h-1.2zM142.48 704.12h1.2v1.2h-1.2zM142.48 681.4h1.2v1.2h-1.2zM142.48 658.68h1.2v1.2h-1.2zM142.48 635.96h1.2v1.2h-1.2zM142.48 613.24h1.2v1.2h-1.2zM142.48 590.52h1.2v1.2h-1.2zM142.48 567.8h1.2v1.2h-1.2zM142.48 545.08h1.2v1.2h-1.2zM142.48 522.36h1.2v1.2h-1.2zM142.48 499.64h1.2v1.2h-1.2zM142.48 476.92h1.2v1.2h-1.2zM142.48 454.2h1.2v1.2h-1.2zM142.48 431.48h1.2v1.2h-1.2zM142.48 408.76h1.2v1.2h-1.2zM142.48 386.04h1.2v1.2h-1.2zM142.48 363.32h1.2v1.2h-1.2zM142.48 340.6h1.2v1.2h-1.2zM142.48 317.88h1.2v1.2h-1.2zM142.48 295.16h1.2v1.2h-1.2zM142.48 272.44h1.2v1.2h-1.2zM142.48 249.72h1.2v1.2h-1.2zM142.48 227h1.2v1.2h-1.2zM142.48 204.28h1.2v1.2h-1.2zM142.48 181.56h1.2v1.2h-1.2zM142.48 158.84h1.2v1.2h-1.2zM165.2 726.84h1.2v1.2h-1.2zM165.2 704.12h1.2v1.2h-1.2zM165.2 681.4h1.2v1.2h-1.2zM165.2 658.68h1.2v1.2h-1.2zM165.2 635.96h1.2v1.2h-1.2zM165.2 613.24h1.2v1.2h-1.2zM165.2 590.52h1.2v1.2h-1.2zM165.2 567.8h1.2v1.2h-1.2zM165.2 545.08h1.2v1.2h-1.2zM165.2 522.36h1.2v1.2h-1.2zM165.2 499.64h1.2v1.2h-1.2zM165.2 476.92h1.2v1.2h-1.2zM165.2 454.2h1.2v1.2h-1.2zM165.2 431.48h1.2v1.2h-1.2zM165.2 408.76h1.2v1.2h-1.2zM165.2 386.04h1.2v1.2h-1.2zM165.2 363.32h1.2v1.2h-1.2zM165.2 340.6h1.2v1.2h-1.2zM165.2 317.88h1.2v1.2h-1.2zM165.2 295.16h1.2v1.2h-1.2zM165.2 272.44h1.2v1.2h-1.2zM165.2 249.72h1.2v1.2h-1.2zM165.2 227h1.2v1.2h-1.2zM165.2 204.28h1.2v1.2h-1.2zM165.2 181.56h1.2v1.2h-1.2zM165.2 158.84h1.2v1.2h-1.2zM187.92 726.84h1.2v1.2h-1.2zM187.92 704.12h1.2v1.2h-1.2zM187.92 681.4h1.2v1.2h-1.2zM187.92 658.68h1.2v1.2h-1.2zM187.92 635.96h1.2v1.2h-1.2zM187.92 613.24h1.2v1.2h-1.2zM187.92 590.52h1.2v1.2h-1.2zM187.92 567.8h1.2v1.2h-1.2zM187.92 545.08h1.2v1.2h-1.2zM187.92 522.36h1.2v1.2h-1.2zM187.92 499.64h1.2v1.2h-1.2zM187.92 476.92h1.2v1.2h-1.2zM187.92 454.2h1.2v1.2h-1.2zM187.92 431.48h1.2v1.2h-1.2zM187.92 408.76h1.2v1.2h-1.2zM187.92 386.04h1.2v1.2h-1.2zM187.92 363.32h1.2v1.2h-1.2zM187.92 340.6h1.2v1.2h-1.2zM187.92 317.88h1.2v1.2h-1.2zM187.92 295.16h1.2v1.2h-1.2zM187.92 272.44h1.2v1.2h-1.2zM187.92 249.72h1.2v1.2h-1.2zM187.92 227h1.2v1.2h-1.2zM187.92 204.28h1.2v1.2h-1.2zM187.92 181.56h1.2v1.2h-1.2zM187.92 158.84h1.2v1.2h-1.2zM210.64 726.84h1.2v1.2h-1.2zM210.64 704.12h1.2v1.2h-1.2zM210.64 681.4h1.2v1.2h-1.2zM210.64 658.68h1.2v1.2h-1.2zM210.64 635.96h1.2v1.2h-1.2zM210.64 613.24h1.2v1.2h-1.2zM210.64 590.52h1.2v1.2h-1.2zM210.64 567.8h1.2v1.2h-1.2zM210.64 545.08h1.2v1.2h-1.2zM210.64 522.36h1.2v1.2h-1.2zM210.64 499.64h1.2v1.2h-1.2zM210.64 476.92h1.2v1.2h-1.2zM210.64 454.2h1.2v1.2h-1.2zM210.64 431.48h1.2v1.2h-1.2zM210.64 408.76h1.2v1.2h-1.2zM210.64 386.04h1.2v1.2h-1.2zM210.64 363.32h1.2v1.2h-1.2zM210.64 340.6h1.2v1.2h-1.2zM210.64 317.88h1.2v1.2h-1.2zM210.64 295.16h1.2v1.2h-1.2zM210.64 272.44h1.2v1.2h-1.2zM210.64 249.72h1.2v1.2h-1.2zM210.64 227h1.2v1.2h-1.2zM210.64 204.28h1.2v1.2h-1.2zM210.64 181.56h1.2v1.2h-1.2zM210.64 158.84h1.2v1.2h-1.2zM233.36 726.84h1.2v1.2h-1.2zM233.36 704.12h1.2v1.2h-1.2zM233.36 681.4h1.2v1.2h-1.2zM233.36 658.68h1.2v1.2h-1.2zM233.36 635.96h1.2v1.2h-1.2zM233.36 613.24h1.2v1.2h-1.2zM233.36 590.52h1.2v1.2h-1.2zM233.36 567.8h1.2v1.2h-1.2zM233.36 545.08h1.2v1.2h-1.2zM233.36 522.36h1.2v1.2h-1.2zM233.36 499.64h1.2v1.2h-1.2zM233.36 476.92h1.2v1.2h-1.2zM233.36 454.2h1.2v1.2h-1.2zM233.36 431.48h1.2v1.2h-1.2zM233.36 408.76h1.2v1.2h-1.2zM233.36 386.04h1.2v1.2h-1.2zM233.36 363.32h1.2v1.2h-1.2zM233.36 340.6h1.2v1.2h-1.2zM233.36 317.88h1.2v1.2h-1.2zM233.36 295.16h1.2v1.2h-1.2zM233.36 272.44h1.2v1.2h-1.2zM233.36 249.72h1.2v1.2h-1.2zM233.36 227h1.2v1.2h-1.2zM233.36 204.28h1.2v1.2h-1.2zM233.36 181.56h1.2v1.2h-1.2zM233.36 158.84h1.2v1.2h-1.2zM256.08 726.84h1.2v1.2h-1.2zM256.08 704.12h1.2v1.2h-1.2zM256.08 681.4h1.2v1.2h-1.2zM256.08 658.68h1.2v1.2h-1.2zM256.08 635.96h1.2v1.2h-1.2zM256.08 613.24h1.2v1.2h-1.2zM256.08 590.52h1.2v1.2h-1.2zM256.08 567.8h1.2v1.2h-1.2zM256.08 545.08h1.2v1.2h-1.2zM256.08 522.36h1.2v1.2h-1.2zM256.08 499.64h1.2v1.2h-1.2zM256.08 476.92h1.2v1.2h-1.2zM256.08 454.2h1.2v1.2h-1.2zM256.08 431.48h1.2v1.2h-1.2zM256.08 408.76h1.2v1.2h-1.2zM256.08 386.04h1.2v1.2h-1.2zM256.08 363.32h1.2v1.2h-1.2zM256.08 340.6h1.2v1.2h-1.2zM256.08 317.88h1.2v1.2h-1.2zM256.08 295.16h1.2v1.2h-1.2zM256.08 272.44h1.2v1.2h-1.2zM256.08 249.72h1.2v1.2h-1.2zM256.08 227h1.2v1.2h-1.2zM256.08 204.28h1.2v1.2h-1.2zM256.08 181.56h1.2v1.2h-1.2zM256.08 158.84h1.2v1.2h-1.2zM278.8 726.84h1.2v1.2h-1.2zM278.8 704.12h1.2v1.2h-1.2zM278.8 681.4h1.2v1.2h-1.2zM278.8 658.68h1.2v1.2h-1.2zM278.8 635.96h1.2v1.2h-1.2zM278.8 613.24h1.2v1.2h-1.2zM278.8 590.52h1.2v1.2h-1.2zM278.8 567.8h1.2v1.2h-1.2zM278.8 545.08h1.2v1.2h-1.2zM278.8 522.36h1.2v1.2h-1.2zM278.8 499.64h1.2v1.2h-1.2zM278.8 476.92h1.2v1.2h-1.2zM278.8 454.2h1.2v1.2h-1.2zM278.8 431.48h1.2v1.2h-1.2zM278.8 408.76h1.2v1.2h-1.2zM278.8 386.04h1.2v1.2h-1.2zM278.8 363.32h1.2v1.2h-1.2zM278.8 340.6h1.2v1.2h-1.2zM278.8 317.88h1.2v1.2h-1.2zM278.8 295.16h1.2v1.2h-1.2zM278.8 272.44h1.2v1.2h-1.2zM278.8 249.72h1.2v1.2h-1.2zM278.8 227h1.2v1.2h-1.2zM278.8 204.28h1.2v1.2h-1.2zM278.8 181.56h1.2v1.2h-1.2zM278.8 158.84h1.2v1.2h-1.2zM301.52 726.84h1.2v1.2h-1.2zM301.52 704.12h1.2v1.2h-1.2zM301.52 681.4h1.2v1.2h-1.2zM301.52 658.68h1.2v1.2h-1.2zM301.52 635.96h1.2v1.2h-1.2zM301.52 613.24h1.2v1.2h-1.2zM301.52 590.52h1.2v1.2h-1.2zM301.52 567.8h1.2v1.2h-1.2zM301.52 545.08h1.2v1.2h-1.2zM301.52 522.36h1.2v1.2h-1.2zM301.52 499.64h1.2v1.2h-1.2zM301.52 476.92h1.2v1.2h-1.2zM301.52 454.2h1.2v1.2h-1.2zM301.52 431.48h1.2v1.2h-1.2zM301.52 408.76h1.2v1.2h-1.2zM301.52 386.04h1.2v1.2h-1.2zM301.52 363.32h1.2v1.2h-1.2zM301.52 340.6h1.2v1.2h-1.2zM301.52 317.88h1.2v1.2h-1.2zM301.52 295.16h1.2v1.2h-1.2zM301.52 272.44h1.2v1.2h-1.2zM301.52 249.72h1.2v1.2h-1.2zM301.52 227h1.2v1.2h-1.2zM301.52 204.28h1.2v1.2h-1.2zM301.52 181.56h1.2v1.2h-1.2zM301.52 158.84h1.2v1.2h-1.2zM324.24 726.84h1.2v1.2h-1.2zM324.24 704.12h1.2v1.2h-1.2zM324.24 681.4h1.2v1.2h-1.2zM324.24 658.68h1.2v1.2h-1.2zM324.24 635.96h1.2v1.2h-1.2zM324.24 613.24h1.2v1.2h-1.2zM324.24 590.52h1.2v1.2h-1.2zM324.24 567.8h1.2v1.2h-1.2zM324.24 545.08h1.2v1.2h-1.2zM324.24 522.36h1.2v1.2h-1.2zM324.24 499.64h1.2v1.2h-1.2zM324.24 476.92h1.2v1.2h-1.2zM324.24 454.2h1.2v1.2h-1.2zM324.24 431.48h1.2v1.2h-1.2zM324.24 408.76h1.2v1.2h-1.2zM324.24 386.04h1.2v1.2h-1.2zM324.24 363.32h1.2v1.2h-1.2zM324.24 340.6h1.2v1.2h-1.2zM324.24 317.88h1.2v1.2h-1.2zM324.24 295.16h1.2v1.2h-1.2zM324.24 272.44h1.2v1.2h-1.2zM324.24 249.72h1.2v1.2h-1.2zM324.24 227h1.2v1.2h-1.2zM324.24 204.28h1.2v1.2h-1.2zM324.24 181.56h1.2v1.2h-1.2zM324.24 158.84h1.2v1.2h-1.2zM346.96 726.84h1.2v1.2h-1.2zM346.96 704.12h1.2v1.2h-1.2zM346.96 681.4h1.2v1.2h-1.2zM346.96 658.68h1.2v1.2h-1.2zM346.96 635.96h1.2v1.2h-1.2zM346.96 613.24h1.2v1.2h-1.2zM346.96 590.52h1.2v1.2h-1.2zM346.96 567.8h1.2v1.2h-1.2zM346.96 545.08h1.2v1.2h-1.2zM346.96 522.36h1.2v1.2h-1.2zM346.96 499.64h1.2v1.2h-1.2zM346.96 476.92h1.2v1.2h-1.2zM346.96 454.2h1.2v1.2h-1.2zM346.96 431.48h1.2v1.2h-1.2zM346.96 408.76h1.2v1.2h-1.2zM346.96 386.04h1.2v1.2h-1.2zM346.96 363.32h1.2v1.2h-1.2zM346.96 340.6h1.2v1.2h-1.2zM346.96 317.88h1.2v1.2h-1.2zM346.96 295.16h1.2v1.2h-1.2zM346.96 272.44h1.2v1.2h-1.2zM346.96 249.72h1.2v1.2h-1.2zM346.96 227h1.2v1.2h-1.2zM346.96 204.28h1.2v1.2h-1.2zM346.96 181.56h1.2v1.2h-1.2zM346.96 158.84h1.2v1.2h-1.2zM369.68 726.84h1.2v1.2h-1.2zM369.68 704.12h1.2v1.2h-1.2zM369.68 681.4h1.2v1.2h-1.2zM369.68 658.68h1.2v1.2h-1.2zM369.68 635.96h1.2v1.2h-1.2zM369.68 613.24h1.2v1.2h-1.2zM369.68 590.52h1.2v1.2h-1.2zM369.68 567.8h1.2v1.2h-1.2zM369.68 545.08h1.2v1.2h-1.2zM369.68 522.36h1.2v1.2h-1.2zM369.68 499.64h1.2v1.2h-1.2zM369.68 476.92h1.2v1.2h-1.2zM369.68 454.2h1.2v1.2h-1.2zM369.68 431.48h1.2v1.2h-1.2zM369.68 408.76h1.2v1.2h-1.2zM369.68 386.04h1.2v1.2h-1.2zM369.68 363.32h1.2v1.2h-1.2zM369.68 340.6h1.2v1.2h-1.2zM369.68 317.88h1.2v1.2h-1.2zM369.68 295.16h1.2v1.2h-1.2zM369.68 272.44h1.2v1.2h-1.2zM369.68 249.72h1.2v1.2h-1.2zM369.68 227h1.2v1.2h-1.2zM369.68 204.28h1.2v1.2h-1.2zM369.68 181.56h1.2v1.2h-1.2zM369.68 158.84h1.2v1.2h-1.2zM392.4 726.84h1.2v1.2h-1.2zM392.4 704.12h1.2v1.2h-1.2zM392.4 681.4h1.2v1.2h-1.2zM392.4 658.68h1.2v1.2h-1.2zM392.4 635.96h1.2v1.2h-1.2zM392.4 613.24h1.2v1.2h-1.2zM392.4 590.52h1.2v1.2h-1.2zM392.4 567.8h1.2v1.2h-1.2zM392.4 545.08h1.2v1.2h-1.2zM392.4 522.36h1.2v1.2h-1.2zM392.4 499.64h1.2v1.2h-1.2zM392.4 476.92h1.2v1.2h-1.2zM392.4 454.2h1.2v1.2h-1.2zM392.4 431.48h1.2v1.2h-1.2zM392.4 408.76h1.2v1.2h-1.2zM392.4 386.04h1.2v1.2h-1.2zM392.4 363.32h1.2v1.2h-1.2zM392.4 340.6h1.2v1.2h-1.2zM392.4 317.88h1.2v1.2h-1.2zM392.4 295.16h1.2v1.2h-1.2zM392.4 272.44h1.2v1.2h-1.2zM392.4 249.72h1.2v1.2h-1.2zM392.4 227h1.2v1.2h-1.2zM392.4 204.28h1.2v1.2h-1.2zM392.4 181.56h1.2v1.2h-1.2zM392.4 158.84h1.2v1.2h-1.2zM415.12 726.84h1.2v1.2h-1.2zM415.12 704.12h1.2v1.2h-1.2zM415.12 681.4h1.2v1.2h-1.2zM415.12 658.68h1.2v1.2h-1.2zM415.12 635.96h1.2v1.2h-1.2zM415.12 613.24h1.2v1.2h-1.2zM415.12 590.52h1.2v1.2h-1.2zM415.12 567.8h1.2v1.2h-1.2zM415.12 545.08h1.2v1.2h-1.2zM415.12 522.36h1.2v1.2h-1.2zM415.12 499.64h1.2v1.2h-1.2zM415.12 476.92h1.2v1.2h-1.2zM415.12 454.2h1.2v1.2h-1.2zM415.12 431.48h1.2v1.2h-1.2zM415.12 408.76h1.2v1.2h-1.2zM415.12 386.04h1.2v1.2h-1.2zM415.12 363.32h1.2v1.2h-1.2zM415.12 340.6h1.2v1.2h-1.2zM415.12 317.88h1.2v1.2h-1.2zM415.12 295.16h1.2v1.2h-1.2zM415.12 272.44h1.2v1.2h-1.2zM415.12 249.72h1.2v1.2h-1.2zM415.12 227h1.2v1.2h-1.2zM415.12 204.28h1.2v1.2h-1.2zM415.12 181.56h1.2v1.2h-1.2zM415.12 158.84h1.2v1.2h-1.2zM437.84 726.84h1.2v1.2h-1.2zM437.84 704.12h1.2v1.2h-1.2zM437.84 681.4h1.2v1.2h-1.2zM437.84 658.68h1.2v1.2h-1.2zM437.84 635.96h1.2v1.2h-1.2zM437.84 613.24h1.2v1.2h-1.2zM437.84 590.52h1.2v1.2h-1.2zM437.84 567.8h1.2v1.2h-1.2zM437.84 545.08h1.2v1.2h-1.2zM437.84 522.36h1.2v1.2h-1.2zM437.84 499.64h1.2v1.2h-1.2zM437.84 476.92h1.2v1.2h-1.2zM437.84 454.2h1.2v1.2h-1.2zM437.84 431.48h1.2v1.2h-1.2zM437.84 408.76h1.2v1.2h-1.2zM437.84 386.04h1.2v1.2h-1.2zM437.84 363.32h1.2v1.2h-1.2zM437.84 340.6h1.2v1.2h-1.2zM437.84 317.88h1.2v1.2h-1.2zM437.84 295.16h1.2v1.2h-1.2zM437.84 272.44h1.2v1.2h-1.2zM437.84 249.72h1.2v1.2h-1.2zM437.84 227h1.2v1.2h-1.2zM437.84 204.28h1.2v1.2h-1.2zM437.84 181.56h1.2v1.2h-1.2zM437.84 158.84h1.2v1.2h-1.2zM460.56 726.84h1.2v1.2h-1.2zM460.56 704.12h1.2v1.2h-1.2zM460.56 681.4h1.2v1.2h-1.2zM460.56 658.68h1.2v1.2h-1.2zM460.56 635.96h1.2v1.2h-1.2zM460.56 613.24h1.2v1.2h-1.2zM460.56 590.52h1.2v1.2h-1.2zM460.56 567.8h1.2v1.2h-1.2zM460.56 545.08h1.2v1.2h-1.2zM460.56 522.36h1.2v1.2h-1.2zM460.56 499.64h1.2v1.2h-1.2zM460.56 476.92h1.2v1.2h-1.2zM460.56 454.2h1.2v1.2h-1.2zM460.56 431.48h1.2v1.2h-1.2zM460.56 408.76h1.2v1.2h-1.2zM460.56 386.04h1.2v1.2h-1.2zM460.56 363.32h1.2v1.2h-1.2zM460.56 340.6h1.2v1.2h-1.2zM460.56 317.88h1.2v1.2h-1.2zM460.56 295.16h1.2v1.2h-1.2zM460.56 272.44h1.2v1.2h-1.2zM460.56 249.72h1.2v1.2h-1.2zM460.56 227h1.2v1.2h-1.2zM460.56 204.28h1.2v1.2h-1.2zM460.56 181.56h1.2v1.2h-1.2zM460.56 158.84h1.2v1.2h-1.2zM483.28 726.84h1.2v1.2h-1.2zM483.28 704.12h1.2v1.2h-1.2zM483.28 681.4h1.2v1.2h-1.2zM483.28 658.68h1.2v1.2h-1.2zM483.28 635.96h1.2v1.2h-1.2zM483.28 613.24h1.2v1.2h-1.2zM483.28 590.52h1.2v1.2h-1.2zM483.28 567.8h1.2v1.2h-1.2zM483.28 545.08h1.2v1.2h-1.2zM483.28 522.36h1.2v1.2h-1.2zM483.28 499.64h1.2v1.2h-1.2zM483.28 476.92h1.2v1.2h-1.2zM483.28 454.2h1.2v1.2h-1.2zM483.28 431.48h1.2v1.2h-1.2zM483.28 408.76h1.2v1.2h-1.2zM483.28 386.04h1.2v1.2h-1.2zM483.28 363.32h1.2v1.2h-1.2zM483.28 340.6h1.2v1.2h-1.2zM483.28 317.88h1.2v1.2h-1.2zM483.28 295.16h1.2v1.2h-1.2zM483.28 272.44h1.2v1.2h-1.2zM483.28 249.72h1.2v1.2h-1.2zM483.28 227h1.2v1.2h-1.2zM483.28 204.28h1.2v1.2h-1.2zM483.28 181.56h1.2v1.2h-1.2zM483.28 158.84h1.2v1.2h-1.2zM506 726.84h1.2v1.2h-1.2zM506 704.12h1.2v1.2h-1.2zM506 681.4h1.2v1.2h-1.2zM506 658.68h1.2v1.2h-1.2zM506 635.96h1.2v1.2h-1.2zM506 613.24h1.2v1.2h-1.2zM506 590.52h1.2v1.2h-1.2zM506 567.8h1.2v1.2h-1.2zM506 545.08h1.2v1.2h-1.2zM506 522.36h1.2v1.2h-1.2zM506 499.64h1.2v1.2h-1.2zM506 476.92h1.2v1.2h-1.2zM506 454.2h1.2v1.2h-1.2zM506 431.48h1.2v1.2h-1.2zM506 408.76h1.2v1.2h-1.2zM506 386.04h1.2v1.2h-1.2zM506 363.32h1.2v1.2h-1.2zM506 340.6h1.2v1.2h-1.2zM506 317.88h1.2v1.2h-1.2zM506 295.16h1.2v1.2h-1.2zM506 272.44h1.2v1.2h-1.2zM506 249.72h1.2v1.2h-1.2zM506 227h1.2v1.2h-1.2zM506 204.28h1.2v1.2h-1.2zM506 181.56h1.2v1.2h-1.2zM506 158.84h1.2v1.2h-1.2zM528.72 726.84h1.2v1.2h-1.2zM528.72 704.12h1.2v1.2h-1.2zM528.72 681.4h1.2v1.2h-1.2zM528.72 658.68h1.2v1.2h-1.2zM528.72 635.96h1.2v1.2h-1.2zM528.72 613.24h1.2v1.2h-1.2zM528.72 590.52h1.2v1.2h-1.2zM528.72 567.8h1.2v1.2h-1.2zM528.72 545.08h1.2v1.2h-1.2zM528.72 522.36h1.2v1.2h-1.2zM528.72 499.64h1.2v1.2h-1.2zM528.72 476.92h1.2v1.2h-1.2zM528.72 454.2h1.2v1.2h-1.2zM528.72 431.48h1.2v1.2h-1.2zM528.72 408.76h1.2v1.2h-1.2zM528.72 386.04h1.2v1.2h-1.2zM528.72 363.32h1.2v1.2h-1.2zM528.72 340.6h1.2v1.2h-1.2zM528.72 317.88h1.2v1.2h-1.2zM528.72 295.16h1.2v1.2h-1.2zM528.72 272.44h1.2v1.2h-1.2zM528.72 249.72h1.2v1.2h-1.2zM528.72 227h1.2v1.2h-1.2zM528.72 204.28h1.2v1.2h-1.2zM528.72 181.56h1.2v1.2h-1.2zM528.72 158.84h1.2v1.2h-1.2zM551.44 726.84h1.2v1.2h-1.2zM551.44 704.12h1.2v1.2h-1.2zM551.44 681.4h1.2v1.2h-1.2zM551.44 658.68h1.2v1.2h-1.2zM551.44 635.96h1.2v1.2h-1.2zM551.44 613.24h1.2v1.2h-1.2zM551.44 590.52h1.2v1.2h-1.2zM551.44 567.8h1.2v1.2h-1.2zM551.44 545.08h1.2v1.2h-1.2zM551.44 522.36h1.2v1.2h-1.2zM551.44 499.64h1.2v1.2h-1.2zM551.44 476.92h1.2v1.2h-1.2zM551.44 454.2h1.2v1.2h-1.2zM551.44 431.48h1.2v1.2h-1.2zM551.44 408.76h1.2v1.2h-1.2zM551.44 386.04h1.2v1.2h-1.2zM551.44 363.32h1.2v1.2h-1.2zM551.44 340.6h1.2v1.2h-1.2zM551.44 317.88h1.2v1.2h-1.2zM551.44 295.16h1.2v1.2h-1.2zM551.44 272.44h1.2v1.2h-1.2zM551.44 249.72h1.2v1.2h-1.2zM551.44 227h1.2v1.2h-1.2zM551.44 204.28h1.2v1.2h-1.2zM551.44 181.56h1.2v1.2h-1.2zM551.44 158.84h1.2v1.2h-1.2zM574.16 726.84h1.2v1.2h-1.2zM574.16 704.12h1.2v1.2h-1.2zM574.16 681.4h1.2v1.2h-1.2zM574.16 658.68h1.2v1.2h-1.2zM574.16 635.96h1.2v1.2h-1.2zM574.16 613.24h1.2v1.2h-1.2zM574.16 590.52h1.2v1.2h-1.2zM574.16 567.8h1.2v1.2h-1.2zM574.16 545.08h1.2v1.2h-1.2zM574.16 522.36h1.2v1.2h-1.2zM574.16 499.64h1.2v1.2h-1.2zM574.16 476.92h1.2v1.2h-1.2zM574.16 454.2h1.2v1.2h-1.2zM574.16 431.48h1.2v1.2h-1.2zM574.16 408.76h1.2v1.2h-1.2zM574.16 386.04h1.2v1.2h-1.2zM574.16 363.32h1.2v1.2h-1.2zM574.16 340.6h1.2v1.2h-1.2zM574.16 317.88h1.2v1.2h-1.2zM574.16 295.16h1.2v1.2h-1.2zM574.16 272.44h1.2v1.2h-1.2zM574.16 249.72h1.2v1.2h-1.2zM574.16 227h1.2v1.2h-1.2zM574.16 204.28h1.2v1.2h-1.2zM574.16 181.56h1.2v1.2h-1.2zM574.16 158.84h1.2v1.2h-1.2zM596.88 726.84h1.2v1.2h-1.2zM596.88 704.12h1.2v1.2h-1.2zM596.88 681.4h1.2v1.2h-1.2zM596.88 658.68h1.2v1.2h-1.2zM596.88 635.96h1.2v1.2h-1.2zM596.88 613.24h1.2v1.2h-1.2zM596.88 590.52h1.2v1.2h-1.2zM596.88 567.8h1.2v1.2h-1.2zM596.88 545.08h1.2v1.2h-1.2zM596.88 522.36h1.2v1.2h-1.2zM596.88 499.64h1.2v1.2h-1.2zM596.88 476.92h1.2v1.2h-1.2zM596.88 454.2h1.2v1.2h-1.2zM596.88 431.48h1.2v1.2h-1.2zM596.88 408.76h1.2v1.2h-1.2zM596.88 386.04h1.2v1.2h-1.2zM596.88 363.32h1.2v1.2h-1.2zM596.88 340.6h1.2v1.2h-1.2zM596.88 317.88h1.2v1.2h-1.2zM596.88 295.16h1.2v1.2h-1.2zM596.88 272.44h1.2v1.2h-1.2zM596.88 249.72h1.2v1.2h-1.2zM596.88 227h1.2v1.2h-1.2zM596.88 204.28h1.2v1.2h-1.2zM596.88 181.56h1.2v1.2h-1.2zM596.88 158.84h1.2v1.2h-1.2zM619.6 726.84h1.2v1.2h-1.2zM619.6 704.12h1.2v1.2h-1.2zM619.6 681.4h1.2v1.2h-1.2zM619.6 658.68h1.2v1.2h-1.2zM619.6 635.96h1.2v1.2h-1.2zM619.6 613.24h1.2v1.2h-1.2zM619.6 590.52h1.2v1.2h-1.2zM619.6 567.8h1.2v1.2h-1.2zM619.6 545.08h1.2v1.2h-1.2zM619.6 522.36h1.2v1.2h-1.2zM619.6 499.64h1.2v1.2h-1.2zM619.6 476.92h1.2v1.2h-1.2zM619.6 454.2h1.2v1.2h-1.2zM619.6 431.48h1.2v1.2h-1.2zM619.6 408.76h1.2v1.2h-1.2zM619.6 386.04h1.2v1.2h-1.2zM619.6 363.32h1.2v1.2h-1.2zM619.6 340.6h1.2v1.2h-1.2zM619.6 317.88h1.2v1.2h-1.2zM619.6 295.16h1.2v1.2h-1.2zM619.6 272.44h1.2v1.2h-1.2zM619.6 249.72h1.2v1.2h-1.2zM619.6 227h1.2v1.2h-1.2zM619.6 204.28h1.2v1.2h-1.2zM619.6 181.56h1.2v1.2h-1.2zM619.6 158.84h1.2v1.2h-1.2zM642.32 726.84h1.2v1.2h-1.2zM642.32 704.12h1.2v1.2h-1.2zM642.32 681.4h1.2v1.2h-1.2zM642.32 658.68h1.2v1.2h-1.2zM642.32 635.96h1.2v1.2h-1.2zM642.32 613.24h1.2v1.2h-1.2zM642.32 590.52h1.2v1.2h-1.2zM642.32 567.8h1.2v1.2h-1.2zM642.32 545.08h1.2v1.2h-1.2zM642.32 522.36h1.2v1.2h-1.2zM642.32 499.64h1.2v1.2h-1.2zM642.32 476.92h1.2v1.2h-1.2zM642.32 454.2h1.2v1.2h-1.2zM642.32 431.48h1.2v1.2h-1.2zM642.32 408.76h1.2v1.2h-1.2zM642.32 386.04h1.2v1.2h-1.2zM642.32 363.32h1.2v1.2h-1.2zM642.32 340.6h1.2v1.2h-1.2zM642.32 317.88h1.2v1.2h-1.2zM642.32 295.16h1.2v1.2h-1.2zM642.32 272.44h1.2v1.2h-1.2zM642.32 249.72h1.2v1.2h-1.2zM642.32 227h1.2v1.2h-1.2zM642.32 204.28h1.2v1.2h-1.2zM642.32 181.56h1.2v1.2h-1.2zM642.32 158.84h1.2v1.2h-1.2zM665.04 726.84h1.2v1.2h-1.2zM665.04 704.12h1.2v1.2h-1.2zM665.04 681.4h1.2v1.2h-1.2zM665.04 658.68h1.2v1.2h-1.2zM665.04 635.96h1.2v1.2h-1.2zM665.04 613.24h1.2v1.2h-1.2zM665.04 590.52h1.2v1.2h-1.2zM665.04 567.8h1.2v1.2h-1.2zM665.04 545.08h1.2v1.2h-1.2zM665.04 522.36h1.2v1.2h-1.2zM665.04 499.64h1.2v1.2h-1.2zM665.04 476.92h1.2v1.2h-1.2zM665.04 454.2h1.2v1.2h-1.2zM665.04 431.48h1.2v1.2h-1.2zM665.04 408.76h1.2v1.2h-1.2zM665.04 386.04h1.2v1.2h-1.2zM665.04 363.32h1.2v1.2h-1.2zM665.04 340.6h1.2v1.2h-1.2zM665.04 317.88h1.2v1.2h-1.2zM665.04 295.16h1.2v1.2h-1.2zM665.04 272.44h1.2v1.2h-1.2zM665.04 249.72h1.2v1.2h-1.2zM665.04 227h1.2v1.2h-1.2zM665.04 204.28h1.2v1.2h-1.2zM665.04 181.56h1.2v1.2h-1.2zM665.04 158.84h1.2v1.2h-1.2zM687.76 726.84h1.2v1.2h-1.2zM687.76 704.12h1.2v1.2h-1.2zM687.76 681.4h1.2v1.2h-1.2zM687.76 658.68h1.2v1.2h-1.2zM687.76 635.96h1.2v1.2h-1.2zM687.76 613.24h1.2v1.2h-1.2zM687.76 590.52h1.2v1.2h-1.2zM687.76 567.8h1.2v1.2h-1.2zM687.76 545.08h1.2v1.2h-1.2zM687.76 522.36h1.2v1.2h-1.2zM687.76 499.64h1.2v1.2h-1.2zM687.76 476.92h1.2v1.2h-1.2zM687.76 454.2h1.2v1.2h-1.2zM687.76 431.48h1.2v1.2h-1.2zM687.76 408.76h1.2v1.2h-1.2zM687.76 386.04h1.2v1.2h-1.2zM687.76 363.32h1.2v1.2h-1.2zM687.76 340.6h1.2v1.2h-1.2zM687.76 317.88h1.2v1.2h-1.2zM687.76 295.16h1.2v1.2h-1.2zM687.76 272.44h1.2v1.2h-1.2zM687.76 249.72h1.2v1.2h-1.2zM687.76 227h1.2v1.2h-1.2zM687.76 204.28h1.2v1.2h-1.2zM687.76 181.56h1.2v1.2h-1.2zM687.76 158.84h1.2v1.2h-1.2zM710.48 726.84h1.2v1.2h-1.2zM710.48 704.12h1.2v1.2h-1.2zM710.48 681.4h1.2v1.2h-1.2zM710.48 658.68h1.2v1.2h-1.2zM710.48 635.96h1.2v1.2h-1.2zM710.48 613.24h1.2v1.2h-1.2zM710.48 590.52h1.2v1.2h-1.2zM710.48 567.8h1.2v1.2h-1.2zM710.48 545.08h1.2v1.2h-1.2zM710.48 522.36h1.2v1.2h-1.2zM710.48 499.64h1.2v1.2h-1.2zM710.48 476.92h1.2v1.2h-1.2zM710.48 454.2h1.2v1.2h-1.2zM710.48 431.48h1.2v1.2h-1.2zM710.48 408.76h1.2v1.2h-1.2zM710.48 386.04h1.2v1.2h-1.2zM710.48 363.32h1.2v1.2h-1.2zM710.48 340.6h1.2v1.2h-1.2zM710.48 317.88h1.2v1.2h-1.2zM710.48 295.16h1.2v1.2h-1.2zM710.48 272.44h1.2v1.2h-1.2zM710.48 249.72h1.2v1.2h-1.2zM710.48 227h1.2v1.2h-1.2zM710.48 204.28h1.2v1.2h-1.2zM710.48 181.56h1.2v1.2h-1.2zM710.48 158.84h1.2v1.2h-1.2zM733.2 726.84h1.2v1.2h-1.2zM733.2 704.12h1.2v1.2h-1.2zM733.2 681.4h1.2v1.2h-1.2zM733.2 658.68h1.2v1.2h-1.2zM733.2 635.96h1.2v1.2h-1.2zM733.2 613.24h1.2v1.2h-1.2zM733.2 590.52h1.2v1.2h-1.2zM733.2 567.8h1.2v1.2h-1.2zM733.2 545.08h1.2v1.2h-1.2zM733.2 522.36h1.2v1.2h-1.2zM733.2 499.64h1.2v1.2h-1.2zM733.2 476.92h1.2v1.2h-1.2zM733.2 454.2h1.2v1.2h-1.2zM733.2 431.48h1.2v1.2h-1.2zM733.2 408.76h1.2v1.2h-1.2zM733.2 386.04h1.2v1.2h-1.2zM733.2 363.32h1.2v1.2h-1.2zM733.2 340.6h1.2v1.2h-1.2zM733.2 317.88h1.2v1.2h-1.2zM733.2 295.16h1.2v1.2h-1.2zM733.2 272.44h1.2v1.2h-1.2zM733.2 249.72h1.2v1.2h-1.2zM733.2 227h1.2v1.2h-1.2zM733.2 204.28h1.2v1.2h-1.2zM733.2 181.56h1.2v1.2h-1.2zM733.2 158.84h1.2v1.2h-1.2zM755.92 726.84h1.2v1.2h-1.2zM755.92 704.12h1.2v1.2h-1.2zM755.92 681.4h1.2v1.2h-1.2zM755.92 658.68h1.2v1.2h-1.2zM755.92 635.96h1.2v1.2h-1.2zM755.92 613.24h1.2v1.2h-1.2zM755.92 590.52h1.2v1.2h-1.2zM755.92 567.8h1.2v1.2h-1.2zM755.92 545.08h1.2v1.2h-1.2zM755.92 522.36h1.2v1.2h-1.2zM755.92 499.64h1.2v1.2h-1.2zM755.92 476.92h1.2v1.2h-1.2zM755.92 454.2h1.2v1.2h-1.2zM755.92 431.48h1.2v1.2h-1.2zM755.92 408.76h1.2v1.2h-1.2zM755.92 386.04h1.2v1.2h-1.2zM755.92 363.32h1.2v1.2h-1.2zM755.92 340.6h1.2v1.2h-1.2zM755.92 317.88h1.2v1.2h-1.2zM755.92 295.16h1.2v1.2h-1.2zM755.92 272.44h1.2v1.2h-1.2zM755.92 249.72h1.2v1.2h-1.2zM755.92 227h1.2v1.2h-1.2zM755.92 204.28h1.2v1.2h-1.2zM755.92 181.56h1.2v1.2h-1.2zM755.92 158.84h1.2v1.2h-1.2zM778.64 726.84h1.2v1.2h-1.2zM778.64 704.12h1.2v1.2h-1.2zM778.64 681.4h1.2v1.2h-1.2zM778.64 658.68h1.2v1.2h-1.2zM778.64 635.96h1.2v1.2h-1.2zM778.64 613.24h1.2v1.2h-1.2zM778.64 590.52h1.2v1.2h-1.2zM778.64 567.8h1.2v1.2h-1.2zM778.64 545.08h1.2v1.2h-1.2zM778.64 522.36h1.2v1.2h-1.2zM778.64 499.64h1.2v1.2h-1.2zM778.64 476.92h1.2v1.2h-1.2zM778.64 454.2h1.2v1.2h-1.2zM778.64 431.48h1.2v1.2h-1.2zM778.64 408.76h1.2v1.2h-1.2zM778.64 386.04h1.2v1.2h-1.2zM778.64 363.32h1.2v1.2h-1.2zM778.64 340.6h1.2v1.2h-1.2zM778.64 317.88h1.2v1.2h-1.2zM778.64 295.16h1.2v1.2h-1.2zM778.64 272.44h1.2v1.2h-1.2zM778.64 249.72h1.2v1.2h-1.2zM778.64 227h1.2v1.2h-1.2zM778.64 204.28h1.2v1.2h-1.2zM778.64 181.56h1.2v1.2h-1.2zM778.64 158.84h1.2v1.2h-1.2zM801.36 726.84h1.2v1.2h-1.2zM801.36 704.12h1.2v1.2h-1.2zM801.36 681.4h1.2v1.2h-1.2zM801.36 658.68h1.2v1.2h-1.2zM801.36 635.96h1.2v1.2h-1.2zM801.36 613.24h1.2v1.2h-1.2zM801.36 590.52h1.2v1.2h-1.2zM801.36 567.8h1.2v1.2h-1.2zM801.36 545.08h1.2v1.2h-1.2zM801.36 522.36h1.2v1.2h-1.2zM801.36 499.64h1.2v1.2h-1.2zM801.36 476.92h1.2v1.2h-1.2zM801.36 454.2h1.2v1.2h-1.2zM801.36 431.48h1.2v1.2h-1.2zM801.36 408.76h1.2v1.2h-1.2zM801.36 386.04h1.2v1.2h-1.2zM801.36 363.32h1.2v1.2h-1.2zM801.36 340.6h1.2v1.2h-1.2zM801.36 317.88h1.2v1.2h-1.2zM801.36 295.16h1.2v1.2h-1.2zM801.36 272.44h1.2v1.2h-1.2zM801.36 249.72h1.2v1.2h-1.2zM801.36 227h1.2v1.2h-1.2zM801.36 204.28h1.2v1.2h-1.2zM801.36 181.56h1.2v1.2h-1.2zM801.36 158.84h1.2v1.2h-1.2zM824.08 726.84h1.2v1.2h-1.2zM824.08 704.12h1.2v1.2h-1.2zM824.08 681.4h1.2v1.2h-1.2zM824.08 658.68h1.2v1.2h-1.2zM824.08 635.96h1.2v1.2h-1.2zM824.08 613.24h1.2v1.2h-1.2zM824.08 590.52h1.2v1.2h-1.2zM824.08 567.8h1.2v1.2h-1.2zM824.08 545.08h1.2v1.2h-1.2zM824.08 522.36h1.2v1.2h-1.2zM824.08 499.64h1.2v1.2h-1.2zM824.08 476.92h1.2v1.2h-1.2zM824.08 454.2h1.2v1.2h-1.2zM824.08 431.48h1.2v1.2h-1.2zM824.08 408.76h1.2v1.2h-1.2zM824.08 386.04h1.2v1.2h-1.2zM824.08 363.32h1.2v1.2h-1.2zM824.08 340.6h1.2v1.2h-1.2zM824.08 317.88h1.2v1.2h-1.2zM824.08 295.16h1.2v1.2h-1.2zM824.08 272.44h1.2v1.2h-1.2zM824.08 249.72h1.2v1.2h-1.2zM824.08 227h1.2v1.2h-1.2zM824.08 204.28h1.2v1.2h-1.2zM824.08 181.56h1.2v1.2h-1.2zM824.08 158.84h1.2v1.2h-1.2zM846.8 726.84h1.2v1.2h-1.2zM846.8 704.12h1.2v1.2h-1.2zM846.8 681.4h1.2v1.2h-1.2zM846.8 658.68h1.2v1.2h-1.2zM846.8 635.96h1.2v1.2h-1.2zM846.8 613.24h1.2v1.2h-1.2zM846.8 590.52h1.2v1.2h-1.2zM846.8 567.8h1.2v1.2h-1.2zM846.8 545.08h1.2v1.2h-1.2zM846.8 522.36h1.2v1.2h-1.2zM846.8 499.64h1.2v1.2h-1.2zM846.8 476.92h1.2v1.2h-1.2zM846.8 454.2h1.2v1.2h-1.2zM846.8 431.48h1.2v1.2h-1.2zM846.8 408.76h1.2v1.2h-1.2zM846.8 386.04h1.2v1.2h-1.2zM846.8 363.32h1.2v1.2h-1.2zM846.8 340.6h1.2v1.2h-1.2zM846.8 317.88h1.2v1.2h-1.2zM846.8 295.16h1.2v1.2h-1.2zM846.8 272.44h1.2v1.2h-1.2zM846.8 249.72h1.2v1.2h-1.2zM846.8 227h1.2v1.2h-1.2zM846.8 204.28h1.2v1.2h-1.2zM846.8 181.56h1.2v1.2h-1.2zM846.8 158.84h1.2v1.2h-1.2zM869.52 726.84h1.2v1.2h-1.2zM869.52 704.12h1.2v1.2h-1.2zM869.52 681.4h1.2v1.2h-1.2zM869.52 658.68h1.2v1.2h-1.2zM869.52 635.96h1.2v1.2h-1.2zM869.52 613.24h1.2v1.2h-1.2zM869.52 590.52h1.2v1.2h-1.2zM869.52 567.8h1.2v1.2h-1.2zM869.52 545.08h1.2v1.2h-1.2zM869.52 522.36h1.2v1.2h-1.2zM869.52 499.64h1.2v1.2h-1.2zM869.52 476.92h1.2v1.2h-1.2zM869.52 454.2h1.2v1.2h-1.2zM869.52 431.48h1.2v1.2h-1.2zM869.52 408.76h1.2v1.2h-1.2zM869.52 386.04h1.2v1.2h-1.2zM869.52 363.32h1.2v1.2h-1.2zM869.52 340.6h1.2v1.2h-1.2zM869.52 317.88h1.2v1.2h-1.2zM869.52 295.16h1.2v1.2h-1.2zM869.52 272.44h1.2v1.2h-1.2zM869.52 249.72h1.2v1.2h-1.2zM869.52 227h1.2v1.2h-1.2zM869.52 204.28h1.2v1.2h-1.2zM869.52 181.56h1.2v1.2h-1.2zM869.52 158.84h1.2v1.2h-1.2zM892.24 726.84h1.2v1.2h-1.2zM892.24 704.12h1.2v1.2h-1.2zM892.24 681.4h1.2v1.2h-1.2zM892.24 658.68h1.2v1.2h-1.2zM892.24 635.96h1.2v1.2h-1.2zM892.24 613.24h1.2v1.2h-1.2zM892.24 590.52h1.2v1.2h-1.2zM892.24 567.8h1.2v1.2h-1.2zM892.24 545.08h1.2v1.2h-1.2zM892.24 522.36h1.2v1.2h-1.2zM892.24 499.64h1.2v1.2h-1.2zM892.24 476.92h1.2v1.2h-1.2zM892.24 454.2h1.2v1.2h-1.2zM892.24 431.48h1.2v1.2h-1.2zM892.24 408.76h1.2v1.2h-1.2zM892.24 386.04h1.2v1.2h-1.2zM892.24 363.32h1.2v1.2h-1.2zM892.24 340.6h1.2v1.2h-1.2zM892.24 317.88h1.2v1.2h-1.2zM892.24 295.16h1.2v1.2h-1.2zM892.24 272.44h1.2v1.2h-1.2zM892.24 249.72h1.2v1.2h-1.2zM892.24 227h1.2v1.2h-1.2zM892.24 204.28h1.2v1.2h-1.2zM892.24 181.56h1.2v1.2h-1.2zM892.24 158.84h1.2v1.2h-1.2zM914.96 726.84h1.2v1.2h-1.2zM914.96 704.12h1.2v1.2h-1.2zM914.96 681.4h1.2v1.2h-1.2zM914.96 658.68h1.2v1.2h-1.2zM914.96 635.96h1.2v1.2h-1.2zM914.96 613.24h1.2v1.2h-1.2zM914.96 590.52h1.2v1.2h-1.2zM914.96 567.8h1.2v1.2h-1.2zM914.96 545.08h1.2v1.2h-1.2zM914.96 522.36h1.2v1.2h-1.2zM914.96 499.64h1.2v1.2h-1.2zM914.96 476.92h1.2v1.2h-1.2zM914.96 454.2h1.2v1.2h-1.2zM914.96 431.48h1.2v1.2h-1.2zM914.96 408.76h1.2v1.2h-1.2zM914.96 386.04h1.2v1.2h-1.2zM914.96 363.32h1.2v1.2h-1.2zM914.96 340.6h1.2v1.2h-1.2zM914.96 317.88h1.2v1.2h-1.2zM914.96 295.16h1.2v1.2h-1.2zM914.96 272.44h1.2v1.2h-1.2zM914.96 249.72h1.2v1.2h-1.2zM914.96 227h1.2v1.2h-1.2zM914.96 204.28h1.2v1.2h-1.2zM914.96 181.56h1.2v1.2h-1.2zM914.96 158.84h1.2v1.2h-1.2zM937.68 726.84h1.2v1.2h-1.2zM937.68 704.12h1.2v1.2h-1.2zM937.68 681.4h1.2v1.2h-1.2zM937.68 658.68h1.2v1.2h-1.2zM937.68 635.96h1.2v1.2h-1.2zM937.68 613.24h1.2v1.2h-1.2zM937.68 590.52h1.2v1.2h-1.2zM937.68 567.8h1.2v1.2h-1.2zM937.68 545.08h1.2v1.2h-1.2zM937.68 522.36h1.2v1.2h-1.2zM937.68 499.64h1.2v1.2h-1.2zM937.68 476.92h1.2v1.2h-1.2zM937.68 454.2h1.2v1.2h-1.2zM937.68 431.48h1.2v1.2h-1.2zM937.68 408.76h1.2v1.2h-1.2zM937.68 386.04h1.2v1.2h-1.2zM937.68 363.32h1.2v1.2h-1.2zM937.68 340.6h1.2v1.2h-1.2zM937.68 317.88h1.2v1.2h-1.2zM937.68 295.16h1.2v1.2h-1.2zM937.68 272.44h1.2v1.2h-1.2zM937.68 249.72h1.2v1.2h-1.2zM937.68 227h1.2v1.2h-1.2zM937.68 204.28h1.2v1.2h-1.2zM937.68 181.56h1.2v1.2h-1.2zM937.68 158.84h1.2v1.2h-1.2zM960.4 726.84h1.2v1.2h-1.2zM960.4 704.12h1.2v1.2h-1.2zM960.4 681.4h1.2v1.2h-1.2zM960.4 658.68h1.2v1.2h-1.2zM960.4 635.96h1.2v1.2h-1.2zM960.4 613.24h1.2v1.2h-1.2zM960.4 590.52h1.2v1.2h-1.2zM960.4 567.8h1.2v1.2h-1.2zM960.4 545.08h1.2v1.2h-1.2zM960.4 522.36h1.2v1.2h-1.2zM960.4 499.64h1.2v1.2h-1.2zM960.4 476.92h1.2v1.2h-1.2zM960.4 454.2h1.2v1.2h-1.2zM960.4 431.48h1.2v1.2h-1.2zM960.4 408.76h1.2v1.2h-1.2zM960.4 386.04h1.2v1.2h-1.2zM960.4 363.32h1.2v1.2h-1.2zM960.4 340.6h1.2v1.2h-1.2zM960.4 317.88h1.2v1.2h-1.2zM960.4 295.16h1.2v1.2h-1.2zM960.4 272.44h1.2v1.2h-1.2zM960.4 249.72h1.2v1.2h-1.2zM960.4 227h1.2v1.2h-1.2zM960.4 204.28h1.2v1.2h-1.2zM960.4 181.56h1.2v1.2h-1.2zM960.4 158.84h1.2v1.2h-1.2zM983.12 726.84h1.2v1.2h-1.2zM983.12 704.12h1.2v1.2h-1.2zM983.12 681.4h1.2v1.2h-1.2zM983.12 658.68h1.2v1.2h-1.2zM983.12 635.96h1.2v1.2h-1.2zM983.12 613.24h1.2v1.2h-1.2zM983.12 590.52h1.2v1.2h-1.2zM983.12 567.8h1.2v1.2h-1.2zM983.12 545.08h1.2v1.2h-1.2zM983.12 522.36h1.2v1.2h-1.2zM983.12 499.64h1.2v1.2h-1.2zM983.12 476.92h1.2v1.2h-1.2zM983.12 454.2h1.2v1.2h-1.2zM983.12 431.48h1.2v1.2h-1.2zM983.12 408.76h1.2v1.2h-1.2zM983.12 386.04h1.2v1.2h-1.2zM983.12 363.32h1.2v1.2h-1.2zM983.12 340.6h1.2v1.2h-1.2zM983.12 317.88h1.2v1.2h-1.2zM983.12 295.16h1.2v1.2h-1.2zM983.12 272.44h1.2v1.2h-1.2zM983.12 249.72h1.2v1.2h-1.2zM983.12 227h1.2v1.2h-1.2zM983.12 204.28h1.2v1.2h-1.2zM983.12 181.56h1.2v1.2h-1.2zM983.12 158.84h1.2v1.2h-1.2zM1005.84 726.84h1.2v1.2h-1.2zM1005.84 704.12h1.2v1.2h-1.2zM1005.84 681.4h1.2v1.2h-1.2zM1005.84 658.68h1.2v1.2h-1.2zM1005.84 635.96h1.2v1.2h-1.2zM1005.84 613.24h1.2v1.2h-1.2zM1005.84 590.52h1.2v1.2h-1.2zM1005.84 567.8h1.2v1.2h-1.2zM1005.84 545.08h1.2v1.2h-1.2zM1005.84 522.36h1.2v1.2h-1.2zM1005.84 499.64h1.2v1.2h-1.2zM1005.84 476.92h1.2v1.2h-1.2zM1005.84 454.2h1.2v1.2h-1.2zM1005.84 431.48h1.2v1.2h-1.2zM1005.84 408.76h1.2v1.2h-1.2zM1005.84 386.04h1.2v1.2h-1.2zM1005.84 363.32h1.2v1.2h-1.2zM1005.84 340.6h1.2v1.2h-1.2zM1005.84 317.88h1.2v1.2h-1.2zM1005.84 295.16h1.2v1.2h-1.2zM1005.84 272.44h1.2v1.2h-1.2zM1005.84 249.72h1.2v1.2h-1.2zM1005.84 227h1.2v1.2h-1.2zM1005.84 204.28h1.2v1.2h-1.2zM1005.84 181.56h1.2v1.2h-1.2zM1005.84 158.84h1.2v1.2h-1.2zM1028.56 726.84h1.2v1.2h-1.2zM1028.56 704.12h1.2v1.2h-1.2zM1028.56 681.4h1.2v1.2h-1.2zM1028.56 658.68h1.2v1.2h-1.2zM1028.56 635.96h1.2v1.2h-1.2zM1028.56 613.24h1.2v1.2h-1.2zM1028.56 590.52h1.2v1.2h-1.2zM1028.56 567.8h1.2v1.2h-1.2zM1028.56 545.08h1.2v1.2h-1.2zM1028.56 522.36h1.2v1.2h-1.2zM1028.56 499.64h1.2v1.2h-1.2zM1028.56 476.92h1.2v1.2h-1.2zM1028.56 454.2h1.2v1.2h-1.2zM1028.56 431.48h1.2v1.2h-1.2zM1028.56 408.76h1.2v1.2h-1.2zM1028.56 386.04h1.2v1.2h-1.2zM1028.56 363.32h1.2v1.2h-1.2zM1028.56 340.6h1.2v1.2h-1.2zM1028.56 317.88h1.2v1.2h-1.2zM1028.56 295.16h1.2v1.2h-1.2zM1028.56 272.44h1.2v1.2h-1.2zM1028.56 249.72h1.2v1.2h-1.2zM1028.56 227h1.2v1.2h-1.2zM1028.56 204.28h1.2v1.2h-1.2zM1028.56 181.56h1.2v1.2h-1.2zM1028.56 158.84h1.2v1.2h-1.2zM1051.28 726.84h1.2v1.2h-1.2zM1051.28 704.12h1.2v1.2h-1.2zM1051.28 681.4h1.2v1.2h-1.2zM1051.28 658.68h1.2v1.2h-1.2zM1051.28 635.96h1.2v1.2h-1.2zM1051.28 613.24h1.2v1.2h-1.2zM1051.28 590.52h1.2v1.2h-1.2zM1051.28 567.8h1.2v1.2h-1.2zM1051.28 545.08h1.2v1.2h-1.2zM1051.28 522.36h1.2v1.2h-1.2zM1051.28 499.64h1.2v1.2h-1.2zM1051.28 476.92h1.2v1.2h-1.2zM1051.28 454.2h1.2v1.2h-1.2zM1051.28 431.48h1.2v1.2h-1.2zM1051.28 408.76h1.2v1.2h-1.2zM1051.28 386.04h1.2v1.2h-1.2zM1051.28 363.32h1.2v1.2h-1.2zM1051.28 340.6h1.2v1.2h-1.2zM1051.28 317.88h1.2v1.2h-1.2zM1051.28 295.16h1.2v1.2h-1.2zM1051.28 272.44h1.2v1.2h-1.2zM1051.28 249.72h1.2v1.2h-1.2zM1051.28 227h1.2v1.2h-1.2zM1051.28 204.28h1.2v1.2h-1.2zM1051.28 181.56h1.2v1.2h-1.2zM1051.28 158.84h1.2v1.2h-1.2zM1074 726.84h1.2v1.2h-1.2zM1074 704.12h1.2v1.2h-1.2zM1074 681.4h1.2v1.2h-1.2zM1074 658.68h1.2v1.2h-1.2zM1074 635.96h1.2v1.2h-1.2zM1074 613.24h1.2v1.2h-1.2zM1074 590.52h1.2v1.2h-1.2zM1074 567.8h1.2v1.2h-1.2zM1074 545.08h1.2v1.2h-1.2zM1074 522.36h1.2v1.2h-1.2zM1074 499.64h1.2v1.2h-1.2zM1074 476.92h1.2v1.2h-1.2zM1074 454.2h1.2v1.2h-1.2zM1074 431.48h1.2v1.2h-1.2zM1074 408.76h1.2v1.2h-1.2zM1074 386.04h1.2v1.2h-1.2zM1074 363.32h1.2v1.2h-1.2zM1074 340.6h1.2v1.2h-1.2zM1074 317.88h1.2v1.2h-1.2zM1074 295.16h1.2v1.2h-1.2zM1074 272.44h1.2v1.2h-1.2zM1074 249.72h1.2v1.2h-1.2zM1074 227h1.2v1.2h-1.2zM1074 204.28h1.2v1.2h-1.2zM1074 181.56h1.2v1.2h-1.2zM1074 158.84h1.2v1.2h-1.2zM1096.72 726.84h1.2v1.2h-1.2zM1096.72 704.12h1.2v1.2h-1.2zM1096.72 681.4h1.2v1.2h-1.2zM1096.72 658.68h1.2v1.2h-1.2zM1096.72 635.96h1.2v1.2h-1.2zM1096.72 613.24h1.2v1.2h-1.2zM1096.72 590.52h1.2v1.2h-1.2zM1096.72 567.8h1.2v1.2h-1.2zM1096.72 545.08h1.2v1.2h-1.2zM1096.72 522.36h1.2v1.2h-1.2zM1096.72 499.64h1.2v1.2h-1.2zM1096.72 476.92h1.2v1.2h-1.2zM1096.72 454.2h1.2v1.2h-1.2zM1096.72 431.48h1.2v1.2h-1.2zM1096.72 408.76h1.2v1.2h-1.2zM1096.72 386.04h1.2v1.2h-1.2zM1096.72 363.32h1.2v1.2h-1.2zM1096.72 340.6h1.2v1.2h-1.2zM1096.72 317.88h1.2v1.2h-1.2zM1096.72 295.16h1.2v1.2h-1.2zM1096.72 272.44h1.2v1.2h-1.2zM1096.72 249.72h1.2v1.2h-1.2zM1096.72 227h1.2v1.2h-1.2zM1096.72 204.28h1.2v1.2h-1.2zM1096.72 181.56h1.2v1.2h-1.2zM1096.72 158.84h1.2v1.2h-1.2zM1119.44 726.84h1.2v1.2h-1.2zM1119.44 704.12h1.2v1.2h-1.2zM1119.44 681.4h1.2v1.2h-1.2zM1119.44 658.68h1.2v1.2h-1.2zM1119.44 635.96h1.2v1.2h-1.2zM1119.44 613.24h1.2v1.2h-1.2zM1119.44 590.52h1.2v1.2h-1.2zM1119.44 567.8h1.2v1.2h-1.2zM1119.44 545.08h1.2v1.2h-1.2zM1119.44 522.36h1.2v1.2h-1.2zM1119.44 499.64h1.2v1.2h-1.2zM1119.44 476.92h1.2v1.2h-1.2zM1119.44 454.2h1.2v1.2h-1.2zM1119.44 431.48h1.2v1.2h-1.2zM1119.44 408.76h1.2v1.2h-1.2zM1119.44 386.04h1.2v1.2h-1.2zM1119.44 363.32h1.2v1.2h-1.2zM1119.44 340.6h1.2v1.2h-1.2zM1119.44 317.88h1.2v1.2h-1.2zM1119.44 295.16h1.2v1.2h-1.2zM1119.44 272.44h1.2v1.2h-1.2zM1119.44 249.72h1.2v1.2h-1.2zM1119.44 227h1.2v1.2h-1.2zM1119.44 204.28h1.2v1.2h-1.2zM1119.44 181.56h1.2v1.2h-1.2zM1119.44 158.84h1.2v1.2h-1.2z" fill="#e2e2e2"/><rect x="288.5" y="214" width="675" height="477" fill="#808080"/><rect x="279.9" y="204.9" width="674.8" height="477.1" fill="#fff" stroke="#c8c8c8" stroke-width="1"/><line x1="506.5" y1="205.5" x2="506.5" y2="681.5" stroke="#f4f4f4" stroke-width="1"/><line x1="733.5" y1="205.5" x2="733.5" y2="681.5" stroke="#f4f4f4" stroke-width="1"/><line x1="280.5" y1="454.5" x2="954" y2="454.5" stroke="#f4f4f4" stroke-width="1"/><line x1="280.5" y1="227.5" x2="954" y2="227.5" stroke="#f4f4f4" stroke-width="1"/><rect x="302.5" y="228" width="629" height="431.3" fill="none" stroke="#7a7af2" stroke-width="2.4"/><rect x="302.5" y="228" width="629" height="431.3" fill="none" stroke="#40409a" stroke-width="1.6"/><path d="M545.5 578.5H931M545.5 591.5H931M545.5 613.5H931M715.5 636.5H931M545.5 578V659M579.5 578V591.5M618.5 578V613.5M817.5 578V613.5M674.5 591.5V613.5M761.5 591.5V613.5M886.5 591.5V613.5M715.5 613.5V659M852.5 636.5V659M886.5 636.5V659" stroke="#444" stroke-width="1" fill="none"/><text x="549" y="586.5" font-size="5.2" fill="#222">Item ref</text><text x="583" y="586.5" font-size="5.2" fill="#222">Quantity</text><text x="622" y="586.5" font-size="5.2" fill="#222">Title/Name, destination, material, dimension etc</text><text x="822" y="586.5" font-size="5.2" fill="#222">Article No./Reference</text><text x="549" y="599" font-size="5.2" fill="#222">Designed by</text><text x="622" y="599" font-size="5.2" fill="#222">Checked by</text><text x="689" y="599" font-size="5.2" fill="#222">Approved by - date</text><text x="768" y="599.5" font-size="5.2" fill="#222">Filename</text><text x="822" y="599.5" font-size="5.2" fill="#222">Date</text><text x="890" y="599.5" font-size="5.2" fill="#222">Scale</text><text x="856" y="645" font-size="5.2" fill="#222">Edition</text><text x="891" y="645" font-size="5.2" fill="#222">Sheet</text><text x="811" y="609" font-size="6" fill="#222" text-anchor="end">file.dxf</text><text x="879.5" y="610" font-size="9.5" fill="#222" text-anchor="end">01/01/2025</text><text x="925.5" y="610" font-size="9" fill="#222" text-anchor="end">1:1</text><text x="925.5" y="655" font-size="9" fill="#222" text-anchor="end">1/1</text><text x="722.5" y="632" font-size="16" fill="#111">Title</text><path d="M404.6 305V280A14.8 14.8 0 0 1 434.2 280V305L461 326.1L463.4 323.1L481.1 337L479.1 340.6L510.9 366.4L490 486.1H453.7V491.4H487.5L489.2 492.8L488.1 500.3Q487.5 502.5 486 502.5H353Q351 502.5 350.6 500.3L349.9 492.8L351 491.4H385.5V486.1H349.2L328.5 366.4L360.7 340.6L358.3 337L375.4 322.9L378.4 326.1Z" fill="none" stroke="#404040" stroke-width="1"/><circle cx="419.4" cy="279.8" r="3.4" fill="none" stroke="#404040" stroke-width="0.9"/><path d="M387.07 386.08A32.3 32.3 0 1 1 444.3 404.3C438 396 432 386 428 380C425 376 421 374 419.42 371.98L419.42 366.59L423.57 363.27L418.59 362.86C416 360 409 360 406.56 363.27C404 366 403.5 370 402.83 374.88C402 379 401.8 385 403.25 388.98C405 393 410 396 415.69 398.1L414.44 400.59L387.07 386.08Z" fill="none" stroke="#404040" stroke-width="0.9"/><path d="M388.32 389.81L428.54 414.28A32.3 32.3 0 0 1 388.32 389.81Z" fill="none" stroke="#404040" stroke-width="0.9"/><path d="M422.74 400.59C424 398 426 398 428.13 398.93L434.76 401.84L442.23 406.4L434.35 412.2L423.98 407.23L421.9 403.08Z" fill="none" stroke="#404040" stroke-width="0.9"/><path d="M418.5 398.8Q416 401 418.5 403.5L420 402Z" fill="none" stroke="#404040" stroke-width="0.8"/><line x1="419.5" y1="241" x2="419.5" y2="526" stroke="#f04a4a" stroke-width="0.9" stroke-dasharray="12 4 0.8 3.5" stroke-dashoffset="5.3"/><line x1="396.5" y1="279.8" x2="442.5" y2="279.8" stroke="#f04a4a" stroke-width="1" stroke-dasharray="10 3 1 3"/><line x1="374" y1="384.2" x2="465" y2="384.2" stroke="#f04a4a" stroke-width="0.9" stroke-dasharray="12 4 0.8 3.5" stroke-dashoffset="2"/><circle cx="415.7" cy="386.3" r="4.8" fill="none" stroke="#f04a4a" stroke-width="0.9"/><path d="M410.5 386.3h10.8M415.7 381v10.6" stroke="#f04a4a" stroke-width="0.8"/><path d="M279.5 662V702M259 682H300" stroke="#e05050" stroke-width="1.2"/></svg>
<div id="hscroll" class="a"></div><div class="a" style="left:232px;top:736px;width:716px;height:8px;border-radius:4px;background:#7b7b7b"></div>
<div class="a" style="left:1083px;top:732px;width:71px;height:16px;background:#ececec"></div><div class="a" style="left:1103px;top:733px;font-size:13px;color:#111">10 &lt; 100</div>
<div id="vscroll" class="a"></div><div class="a" style="left:1143px;top:310px;width:8px;height:266px;border-radius:4px;background:#7b7b7b"></div>
<div class="a" style="left:1153px;top:108px;width:2px;height:691px;background:#e2e2e2"></div><svg class="a" style="left:95px;top:131px" width="1058" height="24" viewBox="95 131 1058 24"><line x1="97.5" y1="148" x2="97.5" y2="155" stroke="#555" stroke-width="1"/><line x1="120.5" y1="148" x2="120.5" y2="155" stroke="#555" stroke-width="1"/><line x1="143.5" y1="148" x2="143.5" y2="155" stroke="#555" stroke-width="1"/><line x1="165.5" y1="148" x2="165.5" y2="155" stroke="#555" stroke-width="1"/><line x1="188.5" y1="148" x2="188.5" y2="155" stroke="#555" stroke-width="1"/><line x1="211.5" y1="148" x2="211.5" y2="155" stroke="#555" stroke-width="1"/><line x1="233.5" y1="148" x2="233.5" y2="155" stroke="#555" stroke-width="1"/><line x1="256.5" y1="148" x2="256.5" y2="155" stroke="#555" stroke-width="1"/><line x1="279.5" y1="148" x2="279.5" y2="155" stroke="#555" stroke-width="1"/><line x1="302.5" y1="148" x2="302.5" y2="155" stroke="#555" stroke-width="1"/><line x1="324.5" y1="148" x2="324.5" y2="155" stroke="#555" stroke-width="1"/><line x1="347.5" y1="148" x2="347.5" y2="155" stroke="#555" stroke-width="1"/><line x1="370.5" y1="148" x2="370.5" y2="155" stroke="#555" stroke-width="1"/><line x1="393.5" y1="148" x2="393.5" y2="155" stroke="#555" stroke-width="1"/><line x1="415.5" y1="148" x2="415.5" y2="155" stroke="#555" stroke-width="1"/><line x1="438.5" y1="148" x2="438.5" y2="155" stroke="#555" stroke-width="1"/><line x1="461.5" y1="148" x2="461.5" y2="155" stroke="#555" stroke-width="1"/><line x1="483.5" y1="148" x2="483.5" y2="155" stroke="#555" stroke-width="1"/><line x1="506.5" y1="148" x2="506.5" y2="155" stroke="#555" stroke-width="1"/><line x1="529.5" y1="148" x2="529.5" y2="155" stroke="#555" stroke-width="1"/><line x1="552.5" y1="148" x2="552.5" y2="155" stroke="#555" stroke-width="1"/><line x1="574.5" y1="148" x2="574.5" y2="155" stroke="#555" stroke-width="1"/><line x1="597.5" y1="148" x2="597.5" y2="155" stroke="#555" stroke-width="1"/><line x1="620.5" y1="148" x2="620.5" y2="155" stroke="#555" stroke-width="1"/><line x1="642.5" y1="148" x2="642.5" y2="155" stroke="#555" stroke-width="1"/><line x1="665.5" y1="148" x2="665.5" y2="155" stroke="#555" stroke-width="1"/><line x1="688.5" y1="148" x2="688.5" y2="155" stroke="#555" stroke-width="1"/><line x1="711.5" y1="148" x2="711.5" y2="155" stroke="#555" stroke-width="1"/><line x1="733.5" y1="148" x2="733.5" y2="155" stroke="#555" stroke-width="1"/><line x1="756.5" y1="148" x2="756.5" y2="155" stroke="#555" stroke-width="1"/><line x1="779.5" y1="148" x2="779.5" y2="155" stroke="#555" stroke-width="1"/><line x1="801.5" y1="148" x2="801.5" y2="155" stroke="#555" stroke-width="1"/><line x1="824.5" y1="148" x2="824.5" y2="155" stroke="#555" stroke-width="1"/><line x1="847.5" y1="148" x2="847.5" y2="155" stroke="#555" stroke-width="1"/><line x1="870.5" y1="148" x2="870.5" y2="155" stroke="#555" stroke-width="1"/><line x1="892.5" y1="148" x2="892.5" y2="155" stroke="#555" stroke-width="1"/><line x1="915.5" y1="148" x2="915.5" y2="155" stroke="#555" stroke-width="1"/><line x1="938.5" y1="148" x2="938.5" y2="155" stroke="#555" stroke-width="1"/><line x1="960.5" y1="148" x2="960.5" y2="155" stroke="#555" stroke-width="1"/><line x1="983.5" y1="148" x2="983.5" y2="155" stroke="#555" stroke-width="1"/><line x1="1006.5" y1="148" x2="1006.5" y2="155" stroke="#555" stroke-width="1"/><line x1="1029.5" y1="148" x2="1029.5" y2="155" stroke="#555" stroke-width="1"/><line x1="1051.5" y1="148" x2="1051.5" y2="155" stroke="#555" stroke-width="1"/><line x1="1074.5" y1="148" x2="1074.5" y2="155" stroke="#555" stroke-width="1"/><line x1="1097.5" y1="148" x2="1097.5" y2="155" stroke="#555" stroke-width="1"/><line x1="1120.5" y1="148" x2="1120.5" y2="155" stroke="#555" stroke-width="1"/></svg>
<div class="a" style="left:95px;top:131px;width:1045px;height:24px;overflow:hidden"><span class="rl" style="left:-17.36px">-80</span><span class="rl" style="left:5.36px">-70</span><span class="rl" style="left:28.08px">-60</span><span class="rl" style="left:50.8px">-50</span><span class="rl" style="left:73.52px">-40</span><span class="rl" style="left:96.24px">-30</span><span class="rl" style="left:118.96px">-20</span><span class="rl" style="left:141.68px">-10</span><span class="rl" style="left:164.4px">0</span><span class="rl" style="left:187.12px">10</span><span class="rl" style="left:209.84px">20</span><span class="rl" style="left:232.56px">30</span><span class="rl" style="left:255.28px">40</span><span class="rl" style="left:278px">50</span><span class="rl" style="left:300.72px">60</span><span class="rl" style="left:323.44px">70</span><span class="rl" style="left:346.16px">80</span><span class="rl" style="left:368.88px">90</span><span class="rl" style="left:391.6px">100</span><span class="rl" style="left:414.32px">110</span><span class="rl" style="left:437.04px">120</span><span class="rl" style="left:459.76px">130</span><span class="rl" style="left:482.48px">140</span><span class="rl" style="left:505.2px">150</span><span class="rl" style="left:527.92px">160</span><span class="rl" style="left:550.64px">170</span><span class="rl" style="left:573.36px">180</span><span class="rl" style="left:596.08px">190</span><span class="rl" style="left:618.8px">200</span><span class="rl" style="left:641.52px">210</span><span class="rl" style="left:664.24px">220</span><span class="rl" style="left:686.96px">230</span><span class="rl" style="left:709.68px">240</span><span class="rl" style="left:732.4px">250</span><span class="rl" style="left:755.12px">260</span><span class="rl" style="left:777.84px">270</span><span class="rl" style="left:800.56px">280</span><span class="rl" style="left:823.28px">290</span><span class="rl" style="left:846px">300</span><span class="rl" style="left:868.72px">310</span><span class="rl" style="left:891.44px">320</span><span class="rl" style="left:914.16px">330</span><span class="rl" style="left:936.88px">340</span><span class="rl" style="left:959.6px">350</span><span class="rl" style="left:982.32px">360</span><span class="rl" style="left:1005.04px">370</span><span class="rl" style="left:1027.76px">380</span></div>
<svg class="a" style="left:72px;top:155px" width="23" height="577" viewBox="72 155 23 577"><line x1="88" y1="750.5" x2="95" y2="750.5" stroke="#555" stroke-width="1"/><line x1="88" y1="727.5" x2="95" y2="727.5" stroke="#555" stroke-width="1"/><line x1="88" y1="704.5" x2="95" y2="704.5" stroke="#555" stroke-width="1"/><line x1="88" y1="682.5" x2="95" y2="682.5" stroke="#555" stroke-width="1"/><line x1="88" y1="659.5" x2="95" y2="659.5" stroke="#555" stroke-width="1"/><line x1="88" y1="636.5" x2="95" y2="636.5" stroke="#555" stroke-width="1"/><line x1="88" y1="613.5" x2="95" y2="613.5" stroke="#555" stroke-width="1"/><line x1="88" y1="591.5" x2="95" y2="591.5" stroke="#555" stroke-width="1"/><line x1="88" y1="568.5" x2="95" y2="568.5" stroke="#555" stroke-width="1"/><line x1="88" y1="545.5" x2="95" y2="545.5" stroke="#555" stroke-width="1"/><line x1="88" y1="522.5" x2="95" y2="522.5" stroke="#555" stroke-width="1"/><line x1="88" y1="500.5" x2="95" y2="500.5" stroke="#555" stroke-width="1"/><line x1="88" y1="477.5" x2="95" y2="477.5" stroke="#555" stroke-width="1"/><line x1="88" y1="454.5" x2="95" y2="454.5" stroke="#555" stroke-width="1"/><line x1="88" y1="432.5" x2="95" y2="432.5" stroke="#555" stroke-width="1"/><line x1="88" y1="409.5" x2="95" y2="409.5" stroke="#555" stroke-width="1"/><line x1="88" y1="386.5" x2="95" y2="386.5" stroke="#555" stroke-width="1"/><line x1="88" y1="363.5" x2="95" y2="363.5" stroke="#555" stroke-width="1"/><line x1="88" y1="341.5" x2="95" y2="341.5" stroke="#555" stroke-width="1"/><line x1="88" y1="318.5" x2="95" y2="318.5" stroke="#555" stroke-width="1"/><line x1="88" y1="295.5" x2="95" y2="295.5" stroke="#555" stroke-width="1"/><line x1="88" y1="273.5" x2="95" y2="273.5" stroke="#555" stroke-width="1"/><line x1="88" y1="250.5" x2="95" y2="250.5" stroke="#555" stroke-width="1"/><line x1="88" y1="227.5" x2="95" y2="227.5" stroke="#555" stroke-width="1"/><line x1="88" y1="204.5" x2="95" y2="204.5" stroke="#555" stroke-width="1"/><line x1="88" y1="182.5" x2="95" y2="182.5" stroke="#555" stroke-width="1"/><line x1="88" y1="159.5" x2="95" y2="159.5" stroke="#555" stroke-width="1"/></svg>
<div class="a" style="left:72px;top:155px;width:23px;height:592px;overflow:hidden"><span class="rv" style="top:566.44px">-20</span><span class="rv" style="top:543.72px">-10</span><span class="rv" style="top:521px">0</span><span class="rv" style="top:498.28px">10</span><span class="rv" style="top:475.56px">20</span><span class="rv" style="top:452.84px">30</span><span class="rv" style="top:430.12px">40</span><span class="rv" style="top:407.4px">50</span><span class="rv" style="top:384.68px">60</span><span class="rv" style="top:361.96px">70</span><span class="rv" style="top:339.24px">80</span><span class="rv" style="top:316.52px">90</span><span class="rv" style="top:293.8px">100</span><span class="rv" style="top:271.08px">110</span><span class="rv" style="top:248.36px">120</span><span class="rv" style="top:225.64px">130</span><span class="rv" style="top:202.92px">140</span><span class="rv" style="top:180.2px">150</span><span class="rv" style="top:157.48px">160</span><span class="rv" style="top:134.76px">170</span><span class="rv" style="top:112.04px">180</span><span class="rv" style="top:89.32px">190</span><span class="rv" style="top:66.6px">200</span><span class="rv" style="top:43.88px">210</span><span class="rv" style="top:21.16px">220</span><span class="rv" style="top:-1.56px">230</span></div>
<svg class="a" style="left:1045px;top:145px" width="13" height="7" viewBox="1045 145 13 7"><path d="M1045.6 145.2H1057.2L1051.4 151.2Z" fill="#000"/></svg>
<svg class="a" style="left:84px;top:400px" width="8" height="14" viewBox="84 400 8 14"><path d="M84.9 401V413L91 407Z" fill="#000"/></svg><div class="a" style="left:72px;top:748px;width:1082px;height:51px;background:#ececec"></div>
<div class="a" style="left:72px;top:748px;width:1082px;height:1.5px;background:#c4c4c4"></div>
<div class="a" style="left:73px;top:749.5px;width:1081px;height:21px;background:#fff"></div>
<div class="a" style="left:72px;top:770px;width:1082px;height:1.5px;background:#c8c8c8"></div>
<div class="a" style="left:77px;top:750px;font-size:13px;color:#1010d8;line-height:16px"><i>Comando:</i> layeradd</div>
<div class="a" style="left:1138px;top:750px;width:16px;height:20px;background:#f8f8f8"></div><div class="a" style="left:1142px;top:750.5px;width:8px;height:17px;border-radius:4px;background:#7b7b7b"></div>
<div class="a" style="left:73px;top:778px;font-size:13px;color:#111;line-height:16px">Comando:</div>
<div class="a" style="left:138px;top:776px;width:989px;height:18px;background:#fff"></div>
<div class="a" style="left:1127px;top:772px;width:26.5px;height:25.5px;border:1px solid #b4b4b4;background:linear-gradient(#f2f2f2,#e4e4e4)"></div>
<svg class="a" style="left:1133px;top:780px" width="15" height="11" viewBox="0 0 15 11"><rect x="0.5" y="0.5" width="14" height="10" fill="#f4f4f4" stroke="#333" stroke-width="1"/><rect x="0.5" y="0.5" width="14" height="3" fill="#111"/><circle cx="11" cy="2" r="0.6" fill="#fff"/></svg><div id="status" class="a"></div>
<div class="a" style="left:2px;top:806.5px;font-size:10px;color:#111;line-height:12px;letter-spacing:0.1px">339.5692,121.0692</div>
<div class="a" style="left:2px;top:827.5px;font-size:10px;color:#111;line-height:12px;letter-spacing:0.1px">@279.5692,-8.9308</div>
<div class="a" style="left:253.5px;top:803px;width:1px;height:40px;background:#8a8a8a"></div>
<div class="a" style="left:256px;top:806.5px;font-size:10px;color:#111;line-height:12px;letter-spacing:0.1px">360.5066&lt;20°</div>
<div class="a" style="left:256px;top:827.5px;font-size:10px;color:#111;line-height:12px;letter-spacing:0.1px">@279.7118&lt;358°</div>
<div class="a" style="left:506.25px;top:818.5px;width:6.5px;height:6.5px;border-radius:50%;background:#c4c4c4"></div>
<div class="a" style="left:940.25px;top:818.5px;width:6.5px;height:6.5px;border-radius:50%;background:#c4c4c4"></div>
<div class="a" style="left:1268.75px;top:818.5px;width:6.5px;height:6.5px;border-radius:50%;background:#c4c4c4"></div>
<div class="a" style="left:569px;top:817px;font-size:10px;color:#111;line-height:12px;letter-spacing:0.1px">Seleccionar entidad o región</div>
<svg class="a" style="left:716px;top:805px" width="20" height="32" viewBox="0 0 20 32"><path d="M10 1.5C4.5 1.5 1.5 5 1.5 11V21C1.5 27 4.5 30.5 10 30.5C15.5 30.5 18.5 27 18.5 21V11C18.5 5 15.5 1.5 10 1.5Z" fill="#fff" stroke="#333" stroke-width="1"/><path d="M1.5 14.5H18.5M10 1.5V14.5" stroke="#333" stroke-width="1"/><rect x="8" y="4" width="4" height="7" rx="2" fill="#fff" stroke="#333" stroke-width="0.9"/></svg>
<div class="a" style="left:949px;top:817px;font-size:10px;color:#111;line-height:12px;letter-spacing:0.1px">No hay entidades seleccionadas.</div><div id="dock" class="a"></div>
<div class="a" style="left:1155px;top:108px;width:300px;height:21px;background:linear-gradient(#ececec,#dcdcdc)"></div>
<svg class="a" style="left:1157px;top:111px" width="14" height="14" viewBox="0 0 14 14"><circle cx="7" cy="7" r="6.8" fill="#6e6e6e"/><path d="M4.3 4.3L9.7 9.7M9.7 4.3L4.3 9.7" stroke="#f0f0f0" stroke-width="1.6"/></svg>
<svg class="a" style="left:1175px;top:111px" width="14" height="14" viewBox="0 0 14 14"><circle cx="7" cy="7" r="6.8" fill="#6e6e6e"/><rect x="5.5" y="3.8" width="4.8" height="3.8" fill="none" stroke="#f0f0f0" stroke-width="1"/><rect x="3.6" y="6" width="4.8" height="3.8" fill="#6e6e6e" stroke="#f0f0f0" stroke-width="1"/></svg>
<div class="a" style="left:1155px;top:111.8px;width:300px;text-align:center;font-size:12px;color:#333;padding-left:35px">Lista de bloques</div>
<div class="a" style="left:1155px;top:128px;width:300px;height:2px;background:#c8c8c8"></div>
<div class="a" style="left:1155.5px;top:130px;width:38.5px;height:26px;border:1.5px solid #a8a8a8;background:linear-gradient(#f6f6f6,#e8e8e8)"></div>
<div class="a" style="left:1192.5px;top:130px;width:38.5px;height:26px;border:1.5px solid #a8a8a8;background:linear-gradient(#f6f6f6,#e8e8e8)"></div>
<div class="a" style="left:1229.5px;top:130px;width:39.5px;height:26px;border:1.5px solid #a8a8a8;background:linear-gradient(#f6f6f6,#e8e8e8)"></div>
<div class="a" style="left:1267.5px;top:130px;width:39.5px;height:26px;border:1.5px solid #a8a8a8;background:linear-gradient(#f6f6f6,#e8e8e8)"></div>
<div class="a" style="left:1305.5px;top:130px;width:38.5px;height:26px;border:1.5px solid #a8a8a8;background:linear-gradient(#f6f6f6,#e8e8e8)"></div>
<div class="a" style="left:1342.5px;top:130px;width:38.5px;height:26px;border:1.5px solid #a8a8a8;background:linear-gradient(#f6f6f6,#e8e8e8)"></div>
<div class="a" style="left:1379.5px;top:130px;width:39.5px;height:26px;border:1.5px solid #a8a8a8;background:linear-gradient(#f6f6f6,#e8e8e8)"></div>
<div class="a" style="left:1417.5px;top:130px;width:37px;height:26px;border:1.5px solid #a8a8a8;background:linear-gradient(#f6f6f6,#e8e8e8)"></div>
<svg class="a" style="left:1166px;top:136px" width="17" height="13" viewBox="0 0 17 13"><g transform="scale(1)"><path d="M1 6.5C4 1.5 13 1.5 16 6.5C13 11.5 4 11.5 1 6.5Z" fill="#111"/><ellipse cx="8.5" cy="6.7" rx="4.6" ry="3.6" fill="#fff"/><circle cx="8.5" cy="6.3" r="3" fill="#111"/><circle cx="7.6" cy="5.2" r="0.8" fill="#fff"/><path d="M0.5 6.5C4 0.5 13 0.5 16.5 6.5" fill="none" stroke="#111" stroke-width="1.4"/></g></svg>
<svg class="a" style="left:1203px;top:136px" width="17" height="13" viewBox="0 0 17 13"><g transform="scale(1)"><g opacity="1"><path d="M1 6.5C4 1.5 13 1.5 16 6.5C13 11.5 4 11.5 1 6.5Z" fill="#aaa"/><ellipse cx="8.5" cy="6.7" rx="4.6" ry="3.6" fill="#fff"/><circle cx="8.5" cy="6.3" r="3" fill="#aaa"/><circle cx="7.6" cy="5.2" r="0.8" fill="#fff"/><path d="M0.5 6.5C4 0.5 13 0.5 16.5 6.5" fill="none" stroke="#aaa" stroke-width="1.4"/></g></g></svg>
<svg class="a" style="left:1243px;top:136.5px" width="12" height="12" viewBox="0 0 12 12"><path d="M6 0.5v11M0.5 6h11" stroke="#e00000" stroke-width="3"/></svg>
<svg class="a" style="left:1281px;top:136.5px" width="12" height="12" viewBox="0 0 12 12"><path d="M0.5 6h11" stroke="#e00000" stroke-width="3"/></svg>
<svg class="a" style="left:1315.5px;top:134px" width="18" height="16" viewBox="0 0 18 16"><text x="3.5" y="12.5" font-size="11.5" fill="#222" font-family="Liberation Sans" text-anchor="middle">a</text><text x="14" y="12.5" font-size="11.5" fill="#222" font-family="Liberation Sans" text-anchor="middle">b</text><path d="M9 1.5v13" stroke="#222" stroke-width="0.8"/></svg>
<svg class="a" style="left:1353.5px;top:134.5px" width="16" height="16" viewBox="0 0 16 16"><path d="M1.5 14.5L2.5 11L12.5 1L15 3.5L5 13.5Z" fill="#e8b040" stroke="#8a6020" stroke-width="0.6"/><path d="M12 1.5L14.5 4" stroke="#e06060" stroke-width="2"/><path d="M1.5 14.5L2.5 11L5 13.5Z" fill="#555"/></svg>
<svg class="a" style="left:1392px;top:134.5px" width="14" height="16" viewBox="0 0 14 16"><rect x="1" y="1" width="12" height="14" fill="#e8eef8" stroke="#9ab" stroke-width="0.6"/><path d="M5 3v7M9 6v6" stroke="#2050e0" stroke-width="1.8"/><path d="M3 9l2 3 2-3zM7 11l2 3 2-3z" fill="#2050e0"/></svg>
<svg class="a" style="left:1429.25px;top:136px" width="13" height="13" viewBox="0 0 13 13"><rect x="0.5" y="0.5" width="12" height="12" fill="#e8805a" stroke="#e03a20" stroke-width="1"/><path d="M3.5 3.5L9.5 9.5M9.5 3.5L3.5 9.5" stroke="#fff" stroke-width="1.6"/></svg>
<div class="a" style="left:1156px;top:156px;width:298px;height:172px;background:#fff"></div>
<div class="a" style="left:1156px;top:197px;width:298px;height:20px;background:#d6d6d6"></div>
<svg class="a" style="left:1161.52px;top:161.28px" width="14.96" height="11.44" viewBox="0 0 14.96 11.44"><g transform="scale(0.88)"><path d="M1 6.5C4 1.5 13 1.5 16 6.5C13 11.5 4 11.5 1 6.5Z" fill="#111"/><ellipse cx="8.5" cy="6.7" rx="4.6" ry="3.6" fill="#fff"/><circle cx="8.5" cy="6.3" r="3" fill="#111"/><circle cx="7.6" cy="5.2" r="0.8" fill="#fff"/><path d="M0.5 6.5C4 0.5 13 0.5 16.5 6.5" fill="none" stroke="#111" stroke-width="1.4"/></g></svg>
<svg class="a" style="left:1161.52px;top:181.28px" width="14.96" height="11.44" viewBox="0 0 14.96 11.44"><g transform="scale(0.88)"><path d="M1 6.5C4 1.5 13 1.5 16 6.5C13 11.5 4 11.5 1 6.5Z" fill="#111"/><ellipse cx="8.5" cy="6.7" rx="4.6" ry="3.6" fill="#fff"/><circle cx="8.5" cy="6.3" r="3" fill="#111"/><circle cx="7.6" cy="5.2" r="0.8" fill="#fff"/><path d="M0.5 6.5C4 0.5 13 0.5 16.5 6.5" fill="none" stroke="#111" stroke-width="1.4"/></g></svg>
<svg class="a" style="left:1161.52px;top:201.28px" width="14.96" height="11.44" viewBox="0 0 14.96 11.44"><g transform="scale(0.88)"><g opacity="0.85"><path d="M1 6.5C4 1.5 13 1.5 16 6.5C13 11.5 4 11.5 1 6.5Z" fill="#3a4a5a"/><ellipse cx="8.5" cy="6.7" rx="4.6" ry="3.6" fill="#fff"/><circle cx="8.5" cy="6.3" r="3" fill="#3a4a5a"/><circle cx="7.6" cy="5.2" r="0.8" fill="#fff"/><path d="M0.5 6.5C4 0.5 13 0.5 16.5 6.5" fill="none" stroke="#3a4a5a" stroke-width="1.4"/></g></g></svg>
<svg class="a" style="left:1184px;top:179.5px" width="14" height="14" viewBox="0 0 14 14"><path d="M1.5 12.5L2.5 9L10.5 1L13 3.5L5 11.5Z" fill="#e8b040" stroke="#8a6020" stroke-width="0.6"/><path d="M10 1.5L12.5 4" stroke="#e06060" stroke-width="2"/><path d="M1.5 12.5L2.5 9L5 11.5Z" fill="#555"/></svg>
<div class="a" style="left:1205px;top:159px;font-size:13.4px;color:#111;line-height:16px">Model (*Model_Space)</div>
<div class="a" style="left:1205px;top:179px;font-size:13.4px;color:#111;line-height:16px">Layout1 (*Paper_Space)</div>
<div class="a" style="left:1205px;top:199px;font-size:13.4px;color:#111;line-height:16px">Borde</div>
<div class="a" style="left:1155px;top:328px;width:300px;height:1px;background:#b8b8b8"></div>
<div class="a" style="left:1155px;top:330px;width:300px;height:21px;background:linear-gradient(#ececec,#dcdcdc)"></div>
<svg class="a" style="left:1157px;top:333px" width="14" height="14" viewBox="0 0 14 14"><circle cx="7" cy="7" r="6.8" fill="#6e6e6e"/><path d="M4.3 4.3L9.7 9.7M9.7 4.3L4.3 9.7" stroke="#f0f0f0" stroke-width="1.6"/></svg>
<svg class="a" style="left:1175px;top:333px" width="14" height="14" viewBox="0 0 14 14"><circle cx="7" cy="7" r="6.8" fill="#6e6e6e"/><rect x="5.5" y="3.8" width="4.8" height="3.8" fill="none" stroke="#f0f0f0" stroke-width="1"/><rect x="3.6" y="6" width="4.8" height="3.8" fill="#6e6e6e" stroke="#f0f0f0" stroke-width="1"/></svg>
<div class="a" style="left:1155px;top:333.8px;width:300px;text-align:center;font-size:12px;color:#333;padding-left:35px">Lista de capas</div>
<div class="a" style="left:1155px;top:350px;width:300px;height:2px;background:#c8c8c8"></div>
<div class="a" style="left:1155.5px;top:352px;width:60.5px;height:26px;border:1.5px solid #a8a8a8;background:linear-gradient(#f6f6f6,#e8e8e8)"></div>
<div class="a" style="left:1214.5px;top:352px;width:62px;height:26px;border:1.5px solid #a8a8a8;background:linear-gradient(#f6f6f6,#e8e8e8)"></div>
<div class="a" style="left:1275px;top:352px;width:61.5px;height:26px;border:1.5px solid #a8a8a8;background:linear-gradient(#f6f6f6,#e8e8e8)"></div>
<div class="a" style="left:1335px;top:352px;width:61.5px;height:26px;border:1.5px solid #a8a8a8;background:linear-gradient(#f6f6f6,#e8e8e8)"></div>
<div class="a" style="left:1395px;top:352px;width:59.5px;height:26px;border:1.5px solid #a8a8a8;background:linear-gradient(#f6f6f6,#e8e8e8)"></div>
<svg class="a" style="left:1177px;top:358px" width="17" height="13" viewBox="0 0 17 13"><g transform="scale(1)"><path d="M1 6.5C4 1.5 13 1.5 16 6.5C13 11.5 4 11.5 1 6.5Z" fill="#111"/><ellipse cx="8.5" cy="6.7" rx="4.6" ry="3.6" fill="#fff"/><circle cx="8.5" cy="6.3" r="3" fill="#111"/><circle cx="7.6" cy="5.2" r="0.8" fill="#fff"/><path d="M0.5 6.5C4 0.5 13 0.5 16.5 6.5" fill="none" stroke="#111" stroke-width="1.4"/></g></svg>
<svg class="a" style="left:1236.75px;top:358px" width="17" height="13" viewBox="0 0 17 13"><g transform="scale(1)"><g opacity="1"><path d="M1 6.5C4 1.5 13 1.5 16 6.5C13 11.5 4 11.5 1 6.5Z" fill="#aaa"/><ellipse cx="8.5" cy="6.7" rx="4.6" ry="3.6" fill="#fff"/><circle cx="8.5" cy="6.3" r="3" fill="#aaa"/><circle cx="7.6" cy="5.2" r="0.8" fill="#fff"/><path d="M0.5 6.5C4 0.5 13 0.5 16.5 6.5" fill="none" stroke="#aaa" stroke-width="1.4"/></g></g></svg>
<svg class="a" style="left:1299.5px;top:358.5px" width="12" height="12" viewBox="0 0 12 12"><path d="M6 0.5v11M0.5 6h11" stroke="#e00000" stroke-width="3"/></svg>
<svg class="a" style="left:1359.5px;top:358.5px" width="12" height="12" viewBox="0 0 12 12"><path d="M0.5 6h11" stroke="#e00000" stroke-width="3"/></svg>
<svg class="a" style="left:1416.5px;top:356.5px" width="16" height="16" viewBox="0 0 16 16"><path d="M1.5 14.5L2.5 11L12.5 1L15 3.5L5 13.5Z" fill="#e8b040" stroke="#8a6020" stroke-width="0.6"/><path d="M12 1.5L14.5 4" stroke="#e06060" stroke-width="2"/><path d="M1.5 14.5L2.5 11L5 13.5Z" fill="#555"/></svg>
<div class="a" style="left:1156px;top:378px;width:298px;height:421px;background:#fff"></div>
<div class="a" style="left:1156px;top:479px;width:298px;height:20px;background:#0b4fd9"></div>
<div class="a" style="left:1161px;top:384px;width:16px;height:10px;background:#000;border:1px solid #000"></div>
<div class="a" style="left:1183px;top:381px;font-size:13.4px;color:#111;line-height:16px">0</div>
<svg class="a" style="left:1415.02px;top:383.28px" width="14.96" height="11.44" viewBox="0 0 14.96 11.44"><g transform="scale(0.88)"><path d="M1 6.5C4 1.5 13 1.5 16 6.5C13 11.5 4 11.5 1 6.5Z" fill="#111"/><ellipse cx="8.5" cy="6.7" rx="4.6" ry="3.6" fill="#fff"/><circle cx="8.5" cy="6.3" r="3" fill="#111"/><circle cx="7.6" cy="5.2" r="0.8" fill="#fff"/><path d="M0.5 6.5C4 0.5 13 0.5 16.5 6.5" fill="none" stroke="#111" stroke-width="1.4"/></g></svg>
<svg class="a" style="left:1439.5px;top:382px" width="11" height="14" viewBox="0 0 11 14"><path d="M2.5 6.5V4.5A3 3 0 0 1 8.5 4.5V6.5" fill="none" stroke="#b4b4b4" stroke-width="1.6"/><rect x="1" y="6.5" width="9" height="7" fill="#b4b4b4"/></svg>
<div class="a" style="left:1161px;top:404px;width:16px;height:10px;background:#007f7f;border:1px solid #000"></div>
<div class="a" style="left:1183px;top:401px;font-size:13.4px;color:#111;line-height:16px">Acotaciones</div>
<svg class="a" style="left:1415.02px;top:403.28px" width="14.96" height="11.44" viewBox="0 0 14.96 11.44"><g transform="scale(0.88)"><path d="M1 6.5C4 1.5 13 1.5 16 6.5C13 11.5 4 11.5 1 6.5Z" fill="#111"/><ellipse cx="8.5" cy="6.7" rx="4.6" ry="3.6" fill="#fff"/><circle cx="8.5" cy="6.3" r="3" fill="#111"/><circle cx="7.6" cy="5.2" r="0.8" fill="#fff"/><path d="M0.5 6.5C4 0.5 13 0.5 16.5 6.5" fill="none" stroke="#111" stroke-width="1.4"/></g></svg>
<svg class="a" style="left:1439.5px;top:402px" width="11" height="14" viewBox="0 0 11 14"><path d="M2.5 6.5V4.5A3 3 0 0 1 8.5 4.5V6.5" fill="none" stroke="#b4b4b4" stroke-width="1.6"/><rect x="1" y="6.5" width="9" height="7" fill="#b4b4b4"/></svg>
<div class="a" style="left:1161px;top:424px;width:16px;height:10px;background:#000;border:1px solid #000"></div>
<div class="a" style="left:1183px;top:421px;font-size:13.4px;color:#111;line-height:16px">Borde</div>
<svg class="a" style="left:1415.02px;top:423.28px" width="14.96" height="11.44" viewBox="0 0 14.96 11.44"><g transform="scale(0.88)"><path d="M1 6.5C4 1.5 13 1.5 16 6.5C13 11.5 4 11.5 1 6.5Z" fill="#111"/><ellipse cx="8.5" cy="6.7" rx="4.6" ry="3.6" fill="#fff"/><circle cx="8.5" cy="6.3" r="3" fill="#111"/><circle cx="7.6" cy="5.2" r="0.8" fill="#fff"/><path d="M0.5 6.5C4 0.5 13 0.5 16.5 6.5" fill="none" stroke="#111" stroke-width="1.4"/></g></svg>
<svg class="a" style="left:1439.5px;top:422px" width="11" height="14" viewBox="0 0 11 14"><path d="M2.5 6.5V4.5A3 3 0 0 1 8.5 4.5V6.5" fill="none" stroke="#b4b4b4" stroke-width="1.6"/><rect x="1" y="6.5" width="9" height="7" fill="#b4b4b4"/></svg>
<div class="a" style="left:1161px;top:444px;width:16px;height:10px;background:#ff0000;border:1px solid #000"></div>
<div class="a" style="left:1183px;top:441px;font-size:13.4px;color:#111;line-height:16px">Centro</div>
<svg class="a" style="left:1415.02px;top:443.28px" width="14.96" height="11.44" viewBox="0 0 14.96 11.44"><g transform="scale(0.88)"><path d="M1 6.5C4 1.5 13 1.5 16 6.5C13 11.5 4 11.5 1 6.5Z" fill="#111"/><ellipse cx="8.5" cy="6.7" rx="4.6" ry="3.6" fill="#fff"/><circle cx="8.5" cy="6.3" r="3" fill="#111"/><circle cx="7.6" cy="5.2" r="0.8" fill="#fff"/><path d="M0.5 6.5C4 0.5 13 0.5 16.5 6.5" fill="none" stroke="#111" stroke-width="1.4"/></g></svg>
<svg class="a" style="left:1439.5px;top:442px" width="11" height="14" viewBox="0 0 11 14"><path d="M2.5 6.5V4.5A3 3 0 0 1 8.5 4.5V6.5" fill="none" stroke="#b4b4b4" stroke-width="1.6"/><rect x="1" y="6.5" width="9" height="7" fill="#b4b4b4"/></svg>
<div class="a" style="left:1161px;top:464px;width:16px;height:10px;background:#fff;border:1px solid #000"></div>
<div class="a" style="left:1183px;top:461px;font-size:13.4px;color:#111;line-height:16px">Defpoints</div>
<svg class="a" style="left:1415.02px;top:463.28px" width="14.96" height="11.44" viewBox="0 0 14.96 11.44"><g transform="scale(0.88)"><path d="M1 6.5C4 1.5 13 1.5 16 6.5C13 11.5 4 11.5 1 6.5Z" fill="#111"/><ellipse cx="8.5" cy="6.7" rx="4.6" ry="3.6" fill="#fff"/><circle cx="8.5" cy="6.3" r="3" fill="#111"/><circle cx="7.6" cy="5.2" r="0.8" fill="#fff"/><path d="M0.5 6.5C4 0.5 13 0.5 16.5 6.5" fill="none" stroke="#111" stroke-width="1.4"/></g></svg>
<svg class="a" style="left:1439.5px;top:462px" width="11" height="14" viewBox="0 0 11 14"><path d="M2.5 6.5V4.5A3 3 0 0 1 8.5 4.5V6.5" fill="none" stroke="#b4b4b4" stroke-width="1.6"/><rect x="1" y="6.5" width="9" height="7" fill="#b4b4b4"/></svg>
<div class="a" style="left:1161px;top:484px;width:16px;height:10px;background:#e040e0;border:1px solid #fff"></div>
<div class="a" style="left:1183px;top:481px;font-size:13.4px;color:#fff;line-height:16px">Ventanas</div>
<svg class="a" style="left:1395px;top:482px" width="14" height="14" viewBox="0 0 14 14"><path d="M1.5 12.5L2.5 9L10.5 1L13 3.5L5 11.5Z" fill="#e8b040" stroke="#8a6020" stroke-width="0.6"/><path d="M10 1.5L12.5 4" stroke="#e06060" stroke-width="2"/><path d="M1.5 12.5L2.5 9L5 11.5Z" fill="#555"/></svg>
<svg class="a" style="left:1415.02px;top:483.28px" width="14.96" height="11.44" viewBox="0 0 14.96 11.44"><g transform="scale(0.88)"><g opacity="1"><path d="M1 6.5C4 1.5 13 1.5 16 6.5C13 11.5 4 11.5 1 6.5Z" fill="#b8b8b8"/><ellipse cx="8.5" cy="6.7" rx="4.6" ry="3.6" fill="#fff"/><circle cx="8.5" cy="6.3" r="3" fill="#b8b8b8"/><circle cx="7.6" cy="5.2" r="0.8" fill="#fff"/><path d="M0.5 6.5C4 0.5 13 0.5 16.5 6.5" fill="none" stroke="#b8b8b8" stroke-width="1.4"/></g></g></svg>
<svg class="a" style="left:1439.5px;top:482px" width="11" height="14" viewBox="0 0 11 14"><path d="M2.5 6.5V4.5A3 3 0 0 1 8.5 4.5V6.5" fill="none" stroke="#c0c0c0" stroke-width="1.6"/><rect x="1" y="6.5" width="9" height="7" fill="#c0c0c0"/></svg>
<div class="a" style="left:1161px;top:504px;width:16px;height:10px;background:#000;border:1px solid #000"></div>
<div class="a" style="left:1183px;top:501px;font-size:13.4px;color:#111;line-height:16px">Visible</div>
<svg class="a" style="left:1415.02px;top:503.28px" width="14.96" height="11.44" viewBox="0 0 14.96 11.44"><g transform="scale(0.88)"><path d="M1 6.5C4 1.5 13 1.5 16 6.5C13 11.5 4 11.5 1 6.5Z" fill="#111"/><ellipse cx="8.5" cy="6.7" rx="4.6" ry="3.6" fill="#fff"/><circle cx="8.5" cy="6.3" r="3" fill="#111"/><circle cx="7.6" cy="5.2" r="0.8" fill="#fff"/><path d="M0.5 6.5C4 0.5 13 0.5 16.5 6.5" fill="none" stroke="#111" stroke-width="1.4"/></g></svg>
<svg class="a" style="left:1439.5px;top:502px" width="11" height="14" viewBox="0 0 11 14"><path d="M2.5 6.5V4.5A3 3 0 0 1 8.5 4.5V6.5" fill="none" stroke="#b4b4b4" stroke-width="1.6"/><rect x="1" y="6.5" width="9" height="7" fill="#b4b4b4"/></svg>
<div class="a" style="left:1153px;top:108px;width:2px;height:691px;background:#e4e4e4"></div><div class="a" style="left:1155px;top:130px;width:1px;height:669px;background:#b8b8b8"></div><div id="rtb" class="a"></div>
<div class="a" style="left:1454px;top:108px;width:1.5px;height:691px;background:#c0c0c0"></div>
<svg class="a" style="left:1463px;top:116px" width="28" height="3" viewBox="0 0 28 3"><rect x="0" y="0" width="2" height="2" rx="1" fill="#a8a8a8"/><rect x="6" y="0" width="2" height="2" rx="1" fill="#a8a8a8"/><rect x="12" y="0" width="2" height="2" rx="1" fill="#a8a8a8"/><rect x="18" y="0" width="2" height="2" rx="1" fill="#a8a8a8"/><rect x="24" y="0" width="2" height="2" rx="1" fill="#a8a8a8"/></svg>
<div class="a" style="left:1456px;top:120px;width:42px;height:42px;background:#bcbcbc;border-radius:7px"></div>
<svg class="a" style="left:1463px;top:127px" width="28" height="28" viewBox="0 0 28 28"><rect x="0.5" y="0.5" width="27" height="27" fill="#fff" stroke="#333" stroke-width="1"/><rect x="0.5" y="0.5" width="27" height="4.5" fill="#000"/><rect x="1.5" y="1.2" width="3" height="3" fill="#fff"/><path d="M7 13l5-2v12l-5 2z" fill="#888"/><path d="M9 12l5-2v12l-5 2z" fill="#bbb" stroke="#777" stroke-width="0.5"/><path d="M12 11l9-3v12l-9 3z" fill="#eee" stroke="#777" stroke-width="0.6"/><path d="M14 19l4-7 1 6z" fill="none" stroke="#e03030" stroke-width="0.9"/></svg>
<div class="a" style="left:1456px;top:167px;width:42px;height:43px;background:#bcbcbc;border-radius:7px"></div>
<svg class="a" style="left:1463px;top:174px" width="28" height="28" viewBox="0 0 28 28"><rect x="0.5" y="0.5" width="27" height="27" fill="#fff" stroke="#333" stroke-width="1"/><rect x="0.5" y="0.5" width="27" height="4.5" fill="#000"/><rect x="1.5" y="1.2" width="3" height="3" fill="#fff"/><rect x="6" y="9" width="11" height="9" fill="#f4e8b8" stroke="#888" stroke-width="0.8"/><circle cx="17" cy="18" r="5" fill="#f0e4b4" fill-opacity="0.85" stroke="#888" stroke-width="0.8"/></svg>
<svg class="a" style="left:1463px;top:221px" width="28" height="28" viewBox="0 0 28 28"><rect x="0.5" y="0.5" width="27" height="27" fill="#fff" stroke="#333" stroke-width="1"/><rect x="0.5" y="0.5" width="27" height="4.5" fill="#000"/><rect x="1.5" y="1.2" width="3" height="3" fill="#fff"/><rect x="5.5" y="10.5" width="17" height="11" rx="2" fill="#f4f6fa" stroke="#b8c8e0" stroke-width="1"/></svg>
<div class="a" style="left:1459px;top:262px;width:38px;height:1px;background:repeating-linear-gradient(90deg,#6a6a6a 0 1px,transparent 1px 3px)"></div>
<svg class="a" style="left:1463px;top:277px" width="28" height="28" viewBox="0 0 28 28"><rect x="0.5" y="0.5" width="27" height="27" fill="#fff" stroke="#333" stroke-width="1"/><rect x="0.5" y="0.5" width="27" height="4.5" fill="#000"/><rect x="1.5" y="1.2" width="3" height="3" fill="#fff"/><rect x="3" y="8" width="4" height="3" fill="#111"/><rect x="3" y="14" width="4" height="3" fill="#111"/><rect x="3" y="20" width="4" height="3" fill="#111"/><rect x="9.5" y="8.5" width="15" height="2.5" fill="none" stroke="#333" stroke-width="0.8"/><rect x="9.5" y="14.5" width="15" height="2.5" fill="none" stroke="#333" stroke-width="0.8"/><rect x="9.5" y="20.5" width="15" height="2.5" fill="none" stroke="#333" stroke-width="0.8"/></svg>
<svg class="a" style="left:1463px;top:323px" width="28" height="28" viewBox="0 0 28 28"><rect x="0.5" y="0.5" width="27" height="27" fill="#fff" stroke="#333" stroke-width="1"/><rect x="0.5" y="0.5" width="27" height="4.5" fill="#000"/><rect x="1.5" y="1.2" width="3" height="3" fill="#fff"/><defs><linearGradient id="fun" x1="0" x2="1"><stop offset="0" stop-color="#bbb"/><stop offset="0.5" stop-color="#777"/><stop offset="1" stop-color="#aaa"/></linearGradient></defs><ellipse cx="14" cy="9.5" rx="8.5" ry="1.8" fill="#888"/><path d="M5.5 9.5Q14 12 22.5 9.5L16 17V24L12 22V17Z" fill="url(#fun)" stroke="#555" stroke-width="0.6"/></svg>
<svg class="a" style="left:1463px;top:369px" width="28" height="28" viewBox="0 0 28 28"><rect x="0.5" y="0.5" width="27" height="27" fill="#fff" stroke="#333" stroke-width="1"/><rect x="0.5" y="0.5" width="27" height="4.5" fill="#000"/><rect x="1.5" y="1.2" width="3" height="3" fill="#fff"/><path d="M6 10l5 3v6l-5 3z" fill="#f4f4f4" stroke="#444" stroke-width="0.8"/><rect x="11" y="12" width="9" height="8" fill="#999"/><path d="M2 16h24" stroke="#e05050" stroke-width="0.8" stroke-dasharray="2 1.5"/></svg>
<div class="a" style="left:1459px;top:410px;width:38px;height:1px;background:repeating-linear-gradient(90deg,#6a6a6a 0 1px,transparent 1px 3px)"></div>
<div class="a" style="left:1456px;top:418px;width:42px;height:43px;background:#bcbcbc;border-radius:7px"></div>
<svg class="a" style="left:1463px;top:424px" width="28" height="28" viewBox="0 0 28 28"><rect x="0.5" y="0.5" width="27" height="27" fill="#fff" stroke="#333" stroke-width="1"/><rect x="0.5" y="0.5" width="27" height="4.5" fill="#000"/><rect x="1.5" y="1.2" width="3" height="3" fill="#fff"/><path d="M3.5 9h9M3.5 12h10M3.5 15h10M3.5 18h11" stroke="#777" stroke-width="0.8"/><rect x="1.5" y="22.5" width="25" height="4" fill="none" stroke="#444" stroke-width="0.7"/><path d="M3 24.5h2M9 24.5h13" stroke="#444" stroke-width="0.8"/></svg>
<svg class="a" style="left:1463px;top:472px" width="28" height="28" viewBox="0 0 28 28"><rect x="0.5" y="0.5" width="27" height="27" fill="#fff" stroke="#333" stroke-width="1"/><rect x="0.5" y="0.5" width="27" height="4.5" fill="#000"/><rect x="1.5" y="1.2" width="3" height="3" fill="#fff"/><rect x="7" y="9" width="14" height="16" rx="1" fill="#c8862a" stroke="#a06818" stroke-width="0.6"/><rect x="8.5" y="10.5" width="11" height="13" fill="#f2f2f2"/><path d="M10 14h8M10 16h8M10 18h8M10 20h6" stroke="#bbb" stroke-width="0.7"/><rect x="11" y="7.5" width="6" height="3" rx="1" fill="#888"/></svg><div class="a" style="left:1389.3px;top:447.5px;width:80px;height:80px;border-radius:50%;background:radial-gradient(circle closest-side,rgba(255,255,255,0) 78%,rgba(255,255,255,0.55) 84%,rgba(170,195,220,0.75) 92%,rgba(150,175,205,0.7) 96%,rgba(150,175,205,0) 100%)"></div>
<svg class="a" style="left:1427.5px;top:485.5px" width="20" height="32" viewBox="0 0 20 32"><path d="M2 1.8V23.5L7.2 18.8L11 27.8L15.2 26L11.5 17.3H18.3Z" fill="#fff" stroke="#111" stroke-width="1.6" stroke-linejoin="round"/></svg></body></html>
